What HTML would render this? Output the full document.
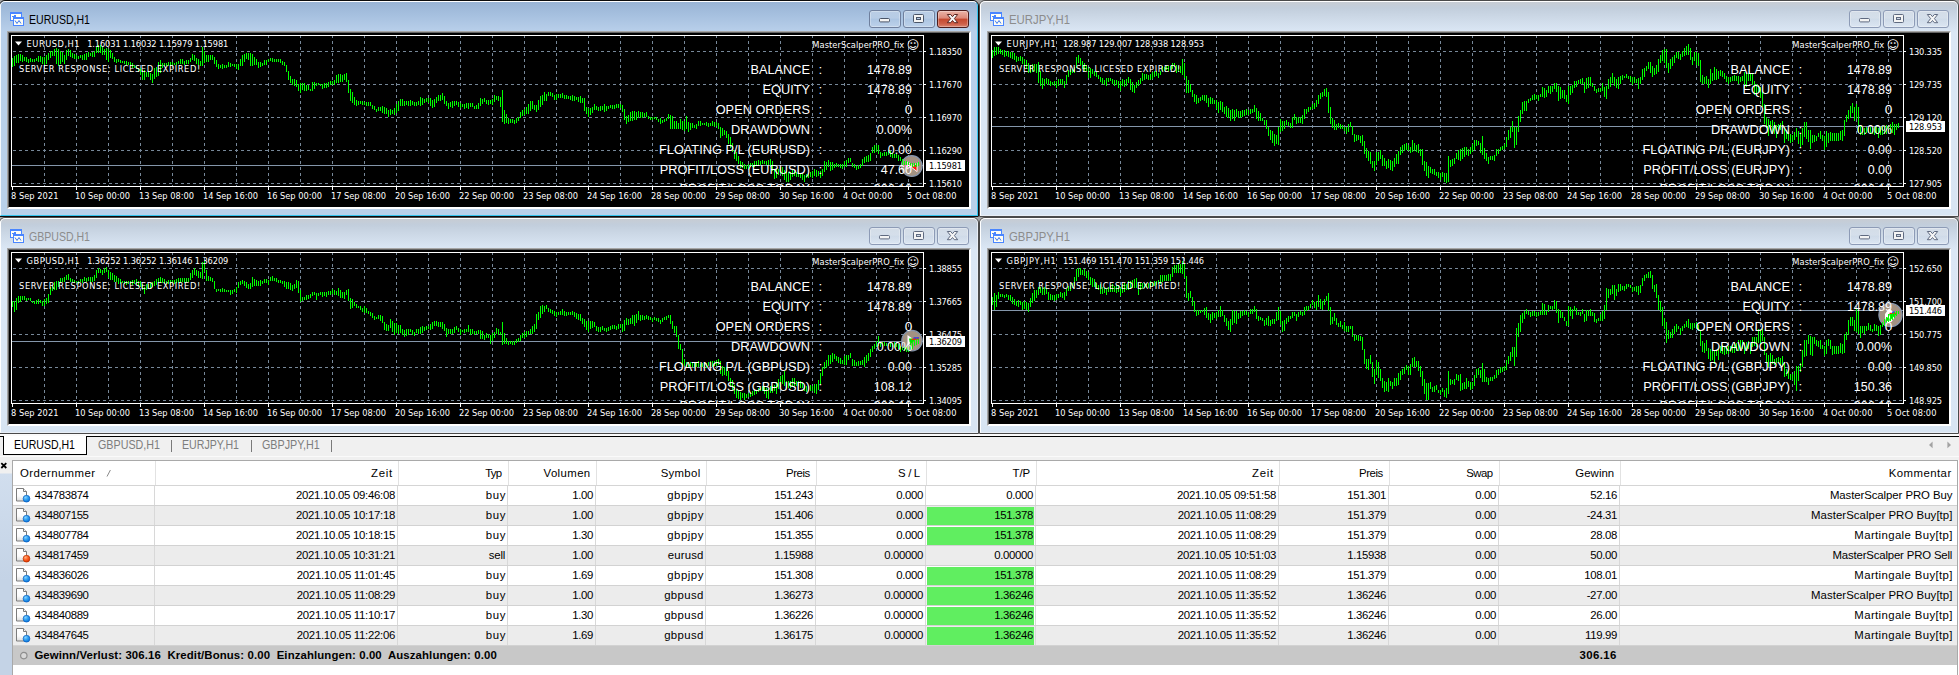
<!DOCTYPE html><html><head><meta charset="utf-8"><title>MetaTrader</title><style>

html,body{margin:0;padding:0}
body{width:1959px;height:675px;overflow:hidden;background:#fff;position:relative}
.a,.t{position:absolute}
.t{white-space:pre;display:block}
.top{position:absolute;left:0;top:0;width:1959px;height:434px;background:#a4a4a4}
.win{position:absolute;width:978px;height:215px;border:1px solid #4a4a4a;border-radius:6px 6px 1px 1px;
 background:linear-gradient(#c8ccd2 0,#c2cedc 7px,#cdd9e7 17px,#dbe7f5 31px,#d8e5f3 100%);overflow:hidden}
.win.act{background:linear-gradient(#98b3d4 0,#a6c0df 14px,#b8cfea 30px,#b9d1ea 100%);border-color:#0c0c0c}
.wi{position:absolute;left:0;top:-1px;width:978px;height:217px;
 box-shadow:inset 1px 0 0 #fbfdff, inset 0 0 0 #fff}
.win .wi::before{content:"";position:absolute;left:0;top:1px;width:978px;height:215px;box-sizing:border-box;
 border:1px solid #e8eef6;border-top-color:#fff;border-left-color:#fff;border-radius:5px 5px 0 0;pointer-events:none}
.win.act .wi::before{border-right-color:#35c4ee;border-bottom-color:#35c4ee;border-top-color:#fff;border-left-color:#f4f8fc}
.client{position:absolute;left:7px;top:31px;width:960px;height:174px;background:#000;
 border-style:solid;border-width:2px;border-color:#a6a6a6 #fff #fff #a6a6a6;
 box-shadow:none}
.client::before{content:"";position:absolute;left:-1px;top:-1px;right:-1px;bottom:-1px;border:1px solid;border-color:#646464 #fff #fff #646464}
.clip{position:absolute;left:12px;top:36px;width:911px;height:150px;overflow:hidden}
.clip .t{margin-left:-12px;margin-top:-36px}
.btn{position:absolute;width:30px;height:16px;border:1px solid #8d9bb6;border-radius:3px;
 background:linear-gradient(rgba(255,255,255,.26) 0,rgba(255,255,255,.16) 45%,rgba(255,255,255,.02) 50%,rgba(255,255,255,.12) 100%);
 box-shadow:inset 0 0 0 1px rgba(255,255,255,.3)}
.win.act .btn{border-color:#6f7f9d}
.win.act .btn.cls{border-color:#4c1d1d;background:linear-gradient(#eab4a8 0,#dc8878 45%,#c4482f 50%,#cd5f48 80%,#d88472 100%);box-shadow:inset 0 0 0 1px rgba(255,255,255,.3)}
.tabbar{position:absolute;left:0;top:434px;width:1959px;height:26px;background:#f0f0f0}
.tabbar::before{content:"";position:absolute;left:0;top:0;width:1959px;height:2px;background:#fbfbfb;border-bottom:1px solid #000}
.tabbar::after{content:"";position:absolute;left:0;top:22px;width:1959px;height:1px;background:#fafafa}
.tab1{position:absolute;left:3px;top:436px;width:84px;height:19px;box-sizing:border-box;background:#fff;border:1px solid #000;border-top:none}
.gutter{position:absolute;left:0;top:460px;width:12px;height:215px;background:linear-gradient(#f0f0f0 0,#f0f0f0 13px,#d1deee 14px,#c4d3e6 120px,#c4d3e6 100%)}
.table{position:absolute;left:0;top:0;width:1959px;height:675px}
.table::before{content:"";position:absolute;left:12px;top:460px;width:1946px;height:215px;box-sizing:border-box;border:1px solid #a9a9a9;border-bottom:none;background:#fff}

</style></head><body>
<div class="top"></div>
<div class="win act" style="left:-1px;top:0px">
<div class="wi">
<svg class="a" style="left:9px;top:11px" width="17" height="16" viewBox="9 11 17 16" shape-rendering="crispEdges"><rect x="10.5" y="13" width="11" height="7.5" fill="#fffef4" stroke="#4a86ff"/><rect x="10" y="12" width="12" height="2" fill="#4a86ff"/><path d="M12 16.5h2l1-1 1 2h3" fill="none" stroke="#4a86ff"/><rect x="13.5" y="18" width="10" height="7.5" fill="#fffef4" stroke="#4a86ff"/><rect x="13" y="17" width="11" height="2" fill="#4a86ff"/><path d="M15 20.5l2 3 2-3 2 3" fill="none" stroke="#3a76f0" shape-rendering="auto"/></svg>
<span class="t" style="top:12.10px;line-height:16px;font-family:'Liberation Sans',sans-serif;font-size:12.4px;color:#000;left:29.00px;transform:scaleX(0.8513);transform-origin:left center;">EURUSD,H1</span>
<div class="btn min" style="left:869px;top:10px"></div>
<div class="btn max" style="left:903px;top:10px"></div>
<div class="btn cls" style="left:937px;top:10px"></div>
<svg class="a" style="left:869px;top:10px" width="100" height="18" viewBox="869 10 100 18"><rect x="879.5" y="18.5" width="10" height="3.4" rx="1" fill="#f4f4f4" stroke="#4a5568" stroke-width="1"/><rect x="913.5" y="14.5" width="10" height="8" rx="1" fill="#f4f4f4" stroke="#4a5568" stroke-width="1"/><rect x="916.5" y="17.5" width="4" height="2" fill="#b6cbe6" stroke="#4a5568" stroke-width="1"/><path d="M947.3 14.5l3.4 0 1.8 2.2 1.8-2.2 3.4 0-3.3 4.1 3.3 4.1-3.4 0-1.8-2.2-1.8 2.2-3.4 0 3.3-4.1z" fill="#f6f6f6" stroke="#5a2420" stroke-width="1" stroke-linejoin="round"/></svg>
<div class="client">
</div>
<svg class="a" style="left:9px;top:33px" width="961" height="174" viewBox="9 33 961 174" shape-rendering="crispEdges"><path d="M44.5 35V186M76.5 35V186M108.5 35V186M140.5 35V186M172.5 35V186M204.5 35V186M236.5 35V186M268.5 35V186M300.5 35V186M332.5 35V186M364.5 35V186M396.5 35V186M428.5 35V186M460.5 35V186M492.5 35V186M524.5 35V186M556.5 35V186M588.5 35V186M620.5 35V186M652.5 35V186M684.5 35V186M716.5 35V186M748.5 35V186M780.5 35V186M812.5 35V186M844.5 35V186M876.5 35V186M908.5 35V186" stroke="#778899" stroke-dasharray="3 3" fill="none"/><path d="M13 51.5H923M13 84.5H923M13 117.5H923M13 150.5H923M13 183.5H923" stroke="#778899" stroke-dasharray="3 3" fill="none"/><path d="M12 165.5H923" stroke="#8496aa" fill="none"/><path d="M11.5 35V187M11 35.5H924M923.5 35V187M11 186.5H924" stroke="#fff" fill="none"/><path d="M12.5 187V190M76.5 187V190M140.5 187V190M204.5 187V190M268.5 187V190M332.5 187V190M396.5 187V190M460.5 187V190M524.5 187V190M588.5 187V190M652.5 187V190M716.5 187V190M780.5 187V190M844.5 187V190M908.5 187V190M924 51.5H926M924 84.5H926M924 117.5H926M924 150.5H926M924 183.5H926" stroke="#fff" fill="none"/><g shape-rendering="auto"><circle cx="911.7" cy="166" r="10.4" fill="#a39282" stroke="#8797ae" stroke-width="1.2"/><path d="M907.1 162l5.6 3.6-5.6 3.4z" fill="#ff6ec7" stroke="#fff" stroke-width=".9"/><path d="M904.7 165.6h3" stroke="#ff6ec7" stroke-width="1.4"/><path d="M917.1 163v8.6l-5.6-4.3z" fill="#ff1414" stroke="#fff" stroke-width=".9"/></g><path d="M12.5 58V67M14.5 56V66M16.5 55V63M18.5 54V63M20.5 54V61M22.5 55V62M24.5 57V61M26.5 57V62M28.5 59V63M30.5 58V62M32.5 59V62M34.5 59V62M36.5 58V61M38.5 56V62M40.5 56V62M42.5 57V64M44.5 57V65M46.5 55V64M48.5 53V60M50.5 51V58M52.5 51V56M54.5 49V56M56.5 48V64M58.5 49V66M60.5 51V64M62.5 52V62M64.5 55V64M66.5 50V60M68.5 49V56M70.5 50V57M72.5 53V58M74.5 54V59M76.5 55V59M78.5 56V59M80.5 55V58M82.5 55V60M84.5 54V60M86.5 53V60M88.5 52V57M90.5 53V56M92.5 52V57M94.5 51V57M96.5 47V53M98.5 45V53M100.5 45V53M102.5 47V55M104.5 49V55M106.5 48V60M108.5 49V62M110.5 50V58M112.5 53V59M114.5 57V62M116.5 59V63M118.5 59V62M120.5 60V63M122.5 61V63M124.5 61V64M126.5 61V65M128.5 62V65M130.5 62V66M132.5 63V68M134.5 65V68M136.5 66V69M138.5 68V72M140.5 68V75M142.5 70V80M144.5 70V80M146.5 72V77M148.5 71V77M150.5 73V80M152.5 74V83M154.5 68V79M156.5 67V77M158.5 62V76M160.5 60V73M162.5 63V68M164.5 63V66M166.5 63V66M168.5 62V66M170.5 62V66M172.5 62V65M174.5 63V65M176.5 62V65M178.5 61V64M180.5 59V64M182.5 59V64M184.5 61V65M186.5 60V64M188.5 60V64M190.5 58V62M192.5 54V60M194.5 55V61M196.5 58V64M198.5 59V65M200.5 61V66M202.5 47V66M204.5 51V63M206.5 55V62M208.5 55V62M210.5 55V60M212.5 55V60M214.5 57V64M216.5 60V67M218.5 64V69M220.5 65V68M222.5 64V69M224.5 65V68M226.5 65V68M228.5 62V67M230.5 63V67M232.5 64V66M234.5 64V67M236.5 64V69M238.5 64V70M240.5 59V66M242.5 55V66M244.5 54V62M246.5 53V59M248.5 53V60M250.5 53V66M252.5 54V66M254.5 57V65M256.5 59V65M258.5 62V68M260.5 62V67M262.5 63V66M264.5 60V65M266.5 60V65M268.5 59V62M270.5 58V61M272.5 58V62M274.5 59V62M276.5 59V62M278.5 59V62M280.5 59V63M282.5 61V65M284.5 62V66M286.5 65V72M288.5 71V80M290.5 76V83M292.5 79V85M294.5 79V86M296.5 80V87M298.5 84V91M300.5 83V93M302.5 83V90M304.5 83V91M306.5 85V91M308.5 85V90M310.5 89V91M312.5 82V91M314.5 82V89M316.5 83V86M318.5 83V85M320.5 84V86M322.5 84V89M324.5 83V88M326.5 83V88M328.5 82V87M330.5 81V85M332.5 81V85M334.5 80V85M336.5 75V83M338.5 74V83M340.5 74V82M342.5 75V82M344.5 74V80M346.5 73V82M348.5 80V93M350.5 89V101M352.5 92V103M354.5 97V105M356.5 100V106M358.5 101V105M360.5 101V104M362.5 101V105M364.5 102V105M366.5 102V106M368.5 102V106M370.5 102V106M372.5 105V109M374.5 106V110M376.5 109V112M378.5 107V111M380.5 107V111M382.5 106V113M384.5 107V114M386.5 108V114M388.5 110V117M390.5 109V115M392.5 110V114M394.5 108V115M396.5 104V113M398.5 101V111M400.5 99V106M402.5 99V106M404.5 101V106M406.5 101V105M408.5 101V106M410.5 100V106M412.5 101V105M414.5 102V106M416.5 102V106M418.5 101V105M420.5 97V106M422.5 98V105M424.5 99V103M426.5 98V102M428.5 98V103M430.5 98V106M432.5 100V108M434.5 99V107M436.5 97V103M438.5 95V101M440.5 95V101M442.5 93V100M444.5 96V104M446.5 101V106M448.5 103V109M450.5 102V107M452.5 101V108M454.5 101V106M456.5 101V105M458.5 102V107M460.5 103V108M462.5 104V107M464.5 104V109M466.5 103V108M468.5 103V109M470.5 103V107M472.5 103V107M474.5 106V109M476.5 105V109M478.5 103V109M480.5 98V106M482.5 99V104M484.5 98V102M486.5 100V104M488.5 100V105M490.5 100V104M492.5 99V105M494.5 95V102M496.5 96V100M498.5 96V101M500.5 97V107M502.5 90V122M504.5 110V124M506.5 114V123M508.5 118V124M510.5 119V123M512.5 119V123M514.5 120V124M516.5 118V123M518.5 117V121M520.5 112V118M522.5 110V116M524.5 109V115M526.5 107V114M528.5 104V114M530.5 101V111M532.5 101V109M534.5 105V110M536.5 105V112M538.5 100V110M540.5 96V107M542.5 95V105M544.5 92V101M546.5 94V101M548.5 92V96M550.5 92V96M552.5 93V97M554.5 95V100M556.5 94V100M558.5 94V98M560.5 94V98M562.5 93V98M564.5 95V99M566.5 95V99M568.5 96V99M570.5 96V100M572.5 95V101M574.5 96V101M576.5 97V100M578.5 97V102M580.5 96V103M582.5 98V103M584.5 98V111M586.5 107V114M588.5 108V117M590.5 108V115M592.5 107V113M594.5 104V110M596.5 106V110M598.5 107V111M600.5 106V111M602.5 106V110M604.5 104V112M606.5 106V111M608.5 106V109M610.5 105V108M612.5 105V109M614.5 105V109M616.5 104V108M618.5 104V108M620.5 104V108M622.5 105V112M624.5 109V120M626.5 116V124M628.5 115V122M630.5 112V121M632.5 111V121M634.5 111V120M636.5 112V120M638.5 111V118M640.5 112V118M642.5 112V118M644.5 113V117M646.5 112V117M648.5 116V119M650.5 117V120M652.5 117V120M654.5 117V119M656.5 117V120M658.5 119V122M660.5 118V124M662.5 120V123M664.5 119V122M666.5 118V121M668.5 114V119M670.5 115V129M672.5 116V129M674.5 121V129M676.5 121V129M678.5 123V129M680.5 119V129M682.5 121V130M684.5 121V131M686.5 116V129M688.5 122V132M690.5 123V130M692.5 123V128M694.5 125V128M696.5 124V129M698.5 121V126M700.5 121V126M702.5 123V125M704.5 123V125M706.5 122V126M708.5 123V127M710.5 123V126M712.5 121V126M714.5 122V127M716.5 122V126M718.5 123V129M720.5 127V138M722.5 128V136M724.5 130V135M726.5 131V138M728.5 134V144M730.5 137V148M732.5 143V152M734.5 150V159M736.5 152V161M738.5 156V164M740.5 161V168M742.5 162V168M744.5 164V169M746.5 165V169M748.5 164V169M750.5 163V167M752.5 163V167M754.5 161V167M756.5 161V166M758.5 160V165M760.5 161V165M762.5 160V164M764.5 161V164M766.5 161V165M768.5 160V165M770.5 159V167M772.5 161V171M774.5 169V179M776.5 168V178M778.5 169V175M780.5 167V174M782.5 167V176M784.5 170V180M786.5 171V182M788.5 172V182M790.5 172V180M792.5 169V177M794.5 171V176M796.5 172V177M798.5 172V177M800.5 173V178M802.5 174V180M804.5 175V182M806.5 174V178M808.5 173V178M810.5 172V177M812.5 171V178M814.5 169V176M816.5 170V177M818.5 171V176M820.5 171V178M822.5 169V176M824.5 161V172M826.5 162V170M828.5 160V167M830.5 162V171M832.5 162V170M834.5 164V168M836.5 163V167M838.5 164V167M840.5 164V168M842.5 164V169M844.5 161V167M846.5 160V167M848.5 158V163M850.5 158V162M852.5 163V167M854.5 164V168M856.5 166V170M858.5 165V169M860.5 164V168M862.5 159V166M864.5 157V163M866.5 156V162M868.5 155V162M870.5 153V161M872.5 147V153M874.5 145V153M876.5 145V152M878.5 145V154M880.5 152V158M882.5 153V156M884.5 152V156M886.5 152V156M888.5 150V155M890.5 151V157M892.5 153V158M894.5 154V158M896.5 154V158M898.5 155V161M900.5 157V161M902.5 159V165M904.5 161V165M906.5 161V165M908.5 162V167M910.5 163V166M912.5 163V167M914.5 163V167M916.5 163V167M918.5 162V166" stroke="#00ff00" fill="none"/><path d="M15 41.5h7l-3.5 4z" fill="#fff" shape-rendering="auto"/><rect x="926" y="160" width="39" height="11" fill="#fff"/></svg>
<span class="t" style="top:38.20px;line-height:12px;font-family:'DejaVu Sans Condensed','DejaVu Sans',sans-serif;font-size:9.2px;color:#fff;letter-spacing:0.519px;left:26.60px;">EURUSD,H1</span>
<span class="t" style="top:38.20px;line-height:12px;font-family:'DejaVu Sans Condensed','DejaVu Sans',sans-serif;font-size:9.2px;color:#fff;letter-spacing:-0.115px;left:87.20px;">1.16031 1.16032 1.15979 1.15981</span>
<span class="t" style="top:62.80px;line-height:12px;font-family:'DejaVu Sans Condensed','DejaVu Sans',sans-serif;font-size:9.2px;color:#fff;letter-spacing:0.629px;left:19.00px;">SERVER RESPONSE: LICESED EXPIRED!</span>
<span class="t" style="top:38.60px;line-height:12px;font-family:'DejaVu Sans Condensed','DejaVu Sans',sans-serif;font-size:9.2px;color:#fff;letter-spacing:0.069px;left:812.30px;">MasterScalperPRO_fix</span>
<span class="t" style="left:906.8px;top:38.2px;line-height:14px;font-family:'DejaVu Sans',sans-serif;font-size:12px;color:#fff">☺</span>
<div class="clip">
<span class="t" style="top:62.00px;line-height:16px;font-family:'Liberation Sans',sans-serif;font-size:13.6px;color:#fff;left:-189.70px;width:1000px;text-align:right;transform:scaleX(0.9387);transform-origin:right center;">BALANCE</span>
<span class="t" style="top:62.00px;line-height:16px;font-family:'Liberation Sans',sans-serif;font-size:13.6px;color:#fff;left:818.50px;">:</span>
<span class="t" style="top:62.00px;line-height:16px;font-family:'Liberation Sans',sans-serif;font-size:13.6px;color:#fff;left:-87.70px;width:1000px;text-align:right;transform:scaleX(0.9176);transform-origin:right center;">1478.89</span>
<span class="t" style="top:82.00px;line-height:16px;font-family:'Liberation Sans',sans-serif;font-size:13.6px;color:#fff;left:-189.70px;width:1000px;text-align:right;transform:scaleX(0.9387);transform-origin:right center;">EQUITY</span>
<span class="t" style="top:82.00px;line-height:16px;font-family:'Liberation Sans',sans-serif;font-size:13.6px;color:#fff;left:818.50px;">:</span>
<span class="t" style="top:82.00px;line-height:16px;font-family:'Liberation Sans',sans-serif;font-size:13.6px;color:#fff;left:-87.70px;width:1000px;text-align:right;transform:scaleX(0.9176);transform-origin:right center;">1478.89</span>
<span class="t" style="top:102.00px;line-height:16px;font-family:'Liberation Sans',sans-serif;font-size:13.6px;color:#fff;left:-189.70px;width:1000px;text-align:right;transform:scaleX(0.9387);transform-origin:right center;">OPEN ORDERS</span>
<span class="t" style="top:102.00px;line-height:16px;font-family:'Liberation Sans',sans-serif;font-size:13.6px;color:#fff;left:818.50px;">:</span>
<span class="t" style="top:102.00px;line-height:16px;font-family:'Liberation Sans',sans-serif;font-size:13.6px;color:#fff;left:-87.70px;width:1000px;text-align:right;">0</span>
<span class="t" style="top:122.00px;line-height:16px;font-family:'Liberation Sans',sans-serif;font-size:13.6px;color:#fff;left:-189.70px;width:1000px;text-align:right;transform:scaleX(0.9387);transform-origin:right center;">DRAWDOWN</span>
<span class="t" style="top:122.00px;line-height:16px;font-family:'Liberation Sans',sans-serif;font-size:13.6px;color:#fff;left:818.50px;">:</span>
<span class="t" style="top:122.00px;line-height:16px;font-family:'Liberation Sans',sans-serif;font-size:13.6px;color:#fff;left:-87.70px;width:1000px;text-align:right;transform:scaleX(0.9176);transform-origin:right center;">0.00%</span>
<span class="t" style="top:142.00px;line-height:16px;font-family:'Liberation Sans',sans-serif;font-size:13.6px;color:#fff;left:-189.70px;width:1000px;text-align:right;transform:scaleX(0.9387);transform-origin:right center;">FLOATING P/L (EURUSD)</span>
<span class="t" style="top:142.00px;line-height:16px;font-family:'Liberation Sans',sans-serif;font-size:13.6px;color:#fff;left:818.50px;">:</span>
<span class="t" style="top:142.00px;line-height:16px;font-family:'Liberation Sans',sans-serif;font-size:13.6px;color:#fff;left:-87.70px;width:1000px;text-align:right;transform:scaleX(0.9176);transform-origin:right center;">0.00</span>
<span class="t" style="top:162.00px;line-height:16px;font-family:'Liberation Sans',sans-serif;font-size:13.6px;color:#fff;left:-189.70px;width:1000px;text-align:right;transform:scaleX(0.9387);transform-origin:right center;">PROFIT/LOSS (EURUSD)</span>
<span class="t" style="top:162.00px;line-height:16px;font-family:'Liberation Sans',sans-serif;font-size:13.6px;color:#fff;left:818.50px;">:</span>
<span class="t" style="top:162.00px;line-height:16px;font-family:'Liberation Sans',sans-serif;font-size:13.6px;color:#fff;left:-87.70px;width:1000px;text-align:right;transform:scaleX(0.9176);transform-origin:right center;">47.60</span>
<span class="t" style="top:181.00px;line-height:16px;font-family:'Liberation Sans',sans-serif;font-size:13.6px;color:#fff;left:-189.70px;width:1000px;text-align:right;transform:scaleX(0.9387);transform-origin:right center;">PROFIT/LOSS TODAY</span>
<span class="t" style="top:181.00px;line-height:16px;font-family:'Liberation Sans',sans-serif;font-size:13.6px;color:#fff;left:818.50px;">:</span>
<span class="t" style="top:181.00px;line-height:16px;font-family:'Liberation Sans',sans-serif;font-size:13.6px;color:#fff;left:-87.70px;width:1000px;text-align:right;transform:scaleX(0.9176);transform-origin:right center;">306.16</span>
</div>
<span class="t" style="top:189.80px;line-height:12px;font-family:'DejaVu Sans Condensed','DejaVu Sans',sans-serif;font-size:9.2px;color:#fff;letter-spacing:0.035px;left:11.00px;">8 Sep 2021</span>
<span class="t" style="top:189.80px;line-height:12px;font-family:'DejaVu Sans Condensed','DejaVu Sans',sans-serif;font-size:9.2px;color:#fff;letter-spacing:-0.022px;left:75.00px;">10 Sep 00:00</span>
<span class="t" style="top:189.80px;line-height:12px;font-family:'DejaVu Sans Condensed','DejaVu Sans',sans-serif;font-size:9.2px;color:#fff;letter-spacing:-0.022px;left:139.00px;">13 Sep 08:00</span>
<span class="t" style="top:189.80px;line-height:12px;font-family:'DejaVu Sans Condensed','DejaVu Sans',sans-serif;font-size:9.2px;color:#fff;letter-spacing:-0.022px;left:203.00px;">14 Sep 16:00</span>
<span class="t" style="top:189.80px;line-height:12px;font-family:'DejaVu Sans Condensed','DejaVu Sans',sans-serif;font-size:9.2px;color:#fff;letter-spacing:-0.022px;left:267.00px;">16 Sep 00:00</span>
<span class="t" style="top:189.80px;line-height:12px;font-family:'DejaVu Sans Condensed','DejaVu Sans',sans-serif;font-size:9.2px;color:#fff;letter-spacing:-0.022px;left:331.00px;">17 Sep 08:00</span>
<span class="t" style="top:189.80px;line-height:12px;font-family:'DejaVu Sans Condensed','DejaVu Sans',sans-serif;font-size:9.2px;color:#fff;letter-spacing:-0.022px;left:395.00px;">20 Sep 16:00</span>
<span class="t" style="top:189.80px;line-height:12px;font-family:'DejaVu Sans Condensed','DejaVu Sans',sans-serif;font-size:9.2px;color:#fff;letter-spacing:-0.022px;left:459.00px;">22 Sep 00:00</span>
<span class="t" style="top:189.80px;line-height:12px;font-family:'DejaVu Sans Condensed','DejaVu Sans',sans-serif;font-size:9.2px;color:#fff;letter-spacing:-0.022px;left:523.00px;">23 Sep 08:00</span>
<span class="t" style="top:189.80px;line-height:12px;font-family:'DejaVu Sans Condensed','DejaVu Sans',sans-serif;font-size:9.2px;color:#fff;letter-spacing:-0.022px;left:587.00px;">24 Sep 16:00</span>
<span class="t" style="top:189.80px;line-height:12px;font-family:'DejaVu Sans Condensed','DejaVu Sans',sans-serif;font-size:9.2px;color:#fff;letter-spacing:-0.022px;left:651.00px;">28 Sep 00:00</span>
<span class="t" style="top:189.80px;line-height:12px;font-family:'DejaVu Sans Condensed','DejaVu Sans',sans-serif;font-size:9.2px;color:#fff;letter-spacing:-0.022px;left:715.00px;">29 Sep 08:00</span>
<span class="t" style="top:189.80px;line-height:12px;font-family:'DejaVu Sans Condensed','DejaVu Sans',sans-serif;font-size:9.2px;color:#fff;letter-spacing:-0.022px;left:779.00px;">30 Sep 16:00</span>
<span class="t" style="top:189.80px;line-height:12px;font-family:'DejaVu Sans Condensed','DejaVu Sans',sans-serif;font-size:9.2px;color:#fff;letter-spacing:0.082px;left:843.00px;">4 Oct 00:00</span>
<span class="t" style="top:189.80px;line-height:12px;font-family:'DejaVu Sans Condensed','DejaVu Sans',sans-serif;font-size:9.2px;color:#fff;letter-spacing:0.082px;left:907.00px;">5 Oct 08:00</span>
<span class="t" style="top:45.60px;line-height:12px;font-family:'DejaVu Sans Condensed','DejaVu Sans',sans-serif;font-size:9.2px;color:#fff;letter-spacing:-0.203px;left:929.00px;">1.18350</span>
<span class="t" style="top:78.60px;line-height:12px;font-family:'DejaVu Sans Condensed','DejaVu Sans',sans-serif;font-size:9.2px;color:#fff;letter-spacing:-0.203px;left:929.00px;">1.17670</span>
<span class="t" style="top:111.60px;line-height:12px;font-family:'DejaVu Sans Condensed','DejaVu Sans',sans-serif;font-size:9.2px;color:#fff;letter-spacing:-0.203px;left:929.00px;">1.16970</span>
<span class="t" style="top:144.60px;line-height:12px;font-family:'DejaVu Sans Condensed','DejaVu Sans',sans-serif;font-size:9.2px;color:#fff;letter-spacing:-0.203px;left:929.00px;">1.16290</span>
<span class="t" style="top:177.60px;line-height:12px;font-family:'DejaVu Sans Condensed','DejaVu Sans',sans-serif;font-size:9.2px;color:#fff;letter-spacing:-0.203px;left:929.00px;">1.15610</span>
<span class="t" style="top:159.60px;line-height:12px;font-family:'DejaVu Sans Condensed','DejaVu Sans',sans-serif;font-size:9.2px;color:#000;letter-spacing:-0.203px;left:929.00px;">1.15981</span>
</div></div>
<div class="win" style="left:979px;top:0px">
<div class="wi">
<svg class="a" style="left:9px;top:11px" width="17" height="16" viewBox="9 11 17 16" shape-rendering="crispEdges"><rect x="10.5" y="13" width="11" height="7.5" fill="#fffef4" stroke="#4a86ff"/><rect x="10" y="12" width="12" height="2" fill="#4a86ff"/><path d="M12 16.5h2l1-1 1 2h3" fill="none" stroke="#4a86ff"/><rect x="13.5" y="18" width="10" height="7.5" fill="#fffef4" stroke="#4a86ff"/><rect x="13" y="17" width="11" height="2" fill="#4a86ff"/><path d="M15 20.5l2 3 2-3 2 3" fill="none" stroke="#3a76f0" shape-rendering="auto"/></svg>
<span class="t" style="top:12.10px;line-height:16px;font-family:'Liberation Sans',sans-serif;font-size:12.4px;color:#8c8c8c;left:29.00px;transform:scaleX(0.9156);transform-origin:left center;">EURJPY,H1</span>
<div class="btn min" style="left:869px;top:10px"></div>
<div class="btn max" style="left:903px;top:10px"></div>
<div class="btn cls" style="left:937px;top:10px"></div>
<svg class="a" style="left:869px;top:10px" width="100" height="18" viewBox="869 10 100 18"><rect x="879.5" y="18.5" width="10" height="3.4" rx="1" fill="#f4f4f4" stroke="#5f6a80" stroke-width="1"/><rect x="913.5" y="14.5" width="10" height="8" rx="1" fill="#f4f4f4" stroke="#5f6a80" stroke-width="1"/><rect x="916.5" y="17.5" width="4" height="2" fill="#cfd9e8" stroke="#5f6a80" stroke-width="1"/><path d="M947.3 14.5l3.4 0 1.8 2.2 1.8-2.2 3.4 0-3.3 4.1 3.3 4.1-3.4 0-1.8-2.2-1.8 2.2-3.4 0 3.3-4.1z" fill="#f6f6f6" stroke="#5f6a80" stroke-width="1" stroke-linejoin="round"/></svg>
<div class="client">
</div>
<svg class="a" style="left:9px;top:33px" width="961" height="174" viewBox="9 33 961 174" shape-rendering="crispEdges"><path d="M44.5 35V186M76.5 35V186M108.5 35V186M140.5 35V186M172.5 35V186M204.5 35V186M236.5 35V186M268.5 35V186M300.5 35V186M332.5 35V186M364.5 35V186M396.5 35V186M428.5 35V186M460.5 35V186M492.5 35V186M524.5 35V186M556.5 35V186M588.5 35V186M620.5 35V186M652.5 35V186M684.5 35V186M716.5 35V186M748.5 35V186M780.5 35V186M812.5 35V186M844.5 35V186M876.5 35V186M908.5 35V186" stroke="#778899" stroke-dasharray="3 3" fill="none"/><path d="M13 51.5H923M13 84.5H923M13 117.5H923M13 150.5H923M13 183.5H923" stroke="#778899" stroke-dasharray="3 3" fill="none"/><path d="M12 126.5H923" stroke="#8496aa" fill="none"/><path d="M11.5 35V187M11 35.5H924M923.5 35V187M11 186.5H924" stroke="#fff" fill="none"/><path d="M12.5 187V190M76.5 187V190M140.5 187V190M204.5 187V190M268.5 187V190M332.5 187V190M396.5 187V190M460.5 187V190M524.5 187V190M588.5 187V190M652.5 187V190M716.5 187V190M780.5 187V190M844.5 187V190M908.5 187V190M924 51.5H926M924 84.5H926M924 117.5H926M924 150.5H926M924 183.5H926" stroke="#fff" fill="none"/><path d="M12.5 50V58M14.5 47V56M16.5 47V55M18.5 47V54M20.5 49V54M22.5 50V55M24.5 50V57M26.5 51V56M28.5 51V57M30.5 52V58M32.5 52V59M34.5 53V60M36.5 56V62M38.5 57V61M40.5 56V61M42.5 57V64M44.5 59V67M46.5 60V69M48.5 63V73M50.5 65V73M52.5 64V72M54.5 64V71M56.5 64V73M58.5 62V83M60.5 71V86M62.5 78V89M64.5 79V86M66.5 78V84M68.5 79V85M70.5 81V86M72.5 82V85M74.5 81V86M76.5 81V88M78.5 79V86M80.5 79V84M82.5 79V85M84.5 81V88M86.5 75V84M88.5 70V77M90.5 69V75M92.5 69V73M94.5 67V73M96.5 57V68M98.5 55V63M100.5 58V65M102.5 61V69M104.5 63V71M106.5 65V71M108.5 67V78M110.5 68V78M112.5 69V74M114.5 71V76M116.5 72V77M118.5 75V79M120.5 77V82M122.5 78V84M124.5 80V85M126.5 78V86M128.5 78V82M130.5 78V81M132.5 79V84M134.5 80V86M136.5 80V85M138.5 81V88M140.5 81V91M142.5 79V86M144.5 80V87M146.5 79V86M148.5 77V83M150.5 79V90M152.5 82V92M154.5 85V93M156.5 82V88M158.5 80V86M160.5 78V84M162.5 73V81M164.5 74V80M166.5 74V79M168.5 75V80M170.5 74V80M172.5 72V79M174.5 71V77M176.5 71V76M178.5 73V78M180.5 71V75M182.5 66V71M184.5 67V71M186.5 66V70M188.5 66V71M190.5 66V70M192.5 63V69M194.5 63V67M196.5 65V73M198.5 66V72M200.5 66V73M202.5 59V75M204.5 63V78M206.5 76V93M208.5 80V93M210.5 84V92M212.5 90V97M214.5 94V102M216.5 95V104M218.5 98V103M220.5 97V101M222.5 95V100M224.5 95V101M226.5 95V103M228.5 98V107M230.5 97V104M232.5 98V104M234.5 100V104M236.5 100V109M238.5 102V113M240.5 101V110M242.5 102V112M244.5 107V114M246.5 106V117M248.5 108V118M250.5 110V121M252.5 109V119M254.5 110V121M256.5 109V117M258.5 111V118M260.5 111V118M262.5 110V117M264.5 110V116M266.5 109V115M268.5 110V115M270.5 109V114M272.5 109V113M274.5 105V112M276.5 108V119M278.5 111V121M280.5 113V121M282.5 118V121M284.5 120V125M286.5 120V129M288.5 127V136M290.5 130V140M292.5 131V143M294.5 134V146M296.5 135V144M298.5 127V145M300.5 119V132M302.5 121V131M304.5 121V129M306.5 120V125M308.5 122V126M310.5 123V128M312.5 117V128M314.5 114V120M316.5 117V124M318.5 117V123M320.5 117V123M322.5 115V124M324.5 109V119M326.5 109V114M328.5 107V112M330.5 107V110M332.5 104V109M334.5 103V109M336.5 100V107M338.5 95V104M340.5 93V99M342.5 92V97M344.5 89V96M346.5 88V97M348.5 92V113M350.5 107V124M352.5 118V128M354.5 120V130M356.5 124V130M358.5 123V128M360.5 124V129M362.5 125V129M364.5 127V131M366.5 127V134M368.5 124V132M370.5 122V127M372.5 126V135M374.5 134V142M376.5 135V141M378.5 135V140M380.5 136V143M382.5 135V146M384.5 141V154M386.5 148V158M388.5 151V161M390.5 152V164M392.5 161V168M394.5 161V171M396.5 152V165M398.5 152V161M400.5 150V159M402.5 155V166M404.5 158V166M406.5 161V169M408.5 159V168M410.5 160V170M412.5 161V171M414.5 158V167M416.5 154V164M418.5 151V164M420.5 147V155M422.5 145V153M424.5 144V151M426.5 143V150M428.5 145V151M430.5 147V153M432.5 140V152M434.5 143V151M436.5 145V152M438.5 144V153M440.5 149V156M442.5 149V165M444.5 161V171M446.5 162V176M448.5 166V178M450.5 167V173M452.5 169V174M454.5 169V175M456.5 172V176M458.5 172V178M460.5 173V180M462.5 172V177M464.5 173V182M466.5 173V183M468.5 156V182M470.5 160V167M472.5 159V166M474.5 158V164M476.5 153V159M478.5 150V160M480.5 149V161M482.5 148V159M484.5 147V157M486.5 147V155M488.5 149V156M490.5 147V154M492.5 144V152M494.5 140V150M496.5 140V146M498.5 141V145M500.5 143V153M502.5 136V155M504.5 148V159M506.5 153V161M508.5 157V164M510.5 156V160M512.5 156V160M514.5 155V161M516.5 149V156M518.5 149V154M520.5 147V151M522.5 146V150M524.5 144V149M526.5 137V147M528.5 130V140M530.5 127V138M532.5 121V132M534.5 127V148M536.5 127V145M538.5 116V132M540.5 110V122M542.5 102V114M544.5 101V111M546.5 101V111M548.5 99V103M550.5 98V101M552.5 95V100M554.5 94V100M556.5 95V99M558.5 95V101M560.5 94V97M562.5 87V97M564.5 88V98M566.5 90V97M568.5 86V93M570.5 86V94M572.5 86V92M574.5 83V89M576.5 83V92M578.5 86V101M580.5 87V99M582.5 90V98M584.5 90V99M586.5 95V102M588.5 86V104M590.5 86V95M592.5 85V93M594.5 81V88M596.5 81V87M598.5 80V84M600.5 79V84M602.5 78V84M604.5 82V93M606.5 78V89M608.5 77V88M610.5 77V86M612.5 83V87M614.5 86V91M616.5 89V93M618.5 88V92M620.5 88V92M622.5 83V91M624.5 87V97M626.5 86V99M628.5 79V89M630.5 77V87M632.5 73V83M634.5 77V86M636.5 79V88M638.5 77V89M640.5 76V84M642.5 75V80M644.5 76V78M646.5 74V78M648.5 76V79M650.5 76V82M652.5 77V85M654.5 77V83M656.5 79V83M658.5 78V89M660.5 77V84M662.5 69V80M664.5 68V77M666.5 66V71M668.5 62V69M670.5 62V73M672.5 66V77M674.5 68V75M676.5 65V74M678.5 59V72M680.5 55V63M682.5 50V61M684.5 49V63M686.5 49V68M688.5 63V73M690.5 59V69M692.5 57V66M694.5 55V63M696.5 52V58M698.5 52V59M700.5 54V60M702.5 51V57M704.5 48V56M706.5 46V55M708.5 44V55M710.5 48V60M712.5 57V65M714.5 52V61M716.5 52V65M718.5 53V66M720.5 60V82M722.5 75V84M724.5 77V84M726.5 76V84M728.5 79V88M730.5 69V84M732.5 73V81M734.5 67V80M736.5 69V80M738.5 71V79M740.5 70V76M742.5 71V77M744.5 73V79M746.5 76V82M748.5 77V84M750.5 77V82M752.5 76V81M754.5 75V81M756.5 76V81M758.5 76V84M760.5 77V82M762.5 76V81M764.5 72V88M766.5 73V87M768.5 73V81M770.5 73V81M772.5 74V85M774.5 81V95M776.5 84V95M778.5 85V93M780.5 87V98M782.5 90V107M784.5 104V124M786.5 117V128M788.5 119V136M790.5 121V130M792.5 120V134M794.5 122V134M796.5 125V138M798.5 124V131M800.5 123V130M802.5 121V130M804.5 127V143M806.5 130V139M808.5 133V141M810.5 134V143M812.5 135V142M814.5 132V140M816.5 128V137M818.5 131V144M820.5 133V147M822.5 128V145M824.5 122V137M826.5 122V139M828.5 130V142M830.5 130V149M832.5 135V143M834.5 135V142M836.5 136V141M838.5 133V137M840.5 131V139M842.5 135V141M844.5 136V150M846.5 131V147M848.5 133V143M850.5 132V141M852.5 133V141M854.5 133V141M856.5 133V141M858.5 133V141M860.5 131V140M862.5 130V141M864.5 120V136M866.5 115V122M868.5 110V119M870.5 106V118M872.5 103V113M874.5 107V121M876.5 104V119M878.5 107V133M880.5 125V135M882.5 126V135M884.5 128V135M886.5 127V133M888.5 128V133M890.5 127V134M892.5 128V134M894.5 127V135M896.5 127V134M898.5 128V138M900.5 127V135M902.5 126V135M904.5 126V134M906.5 125V134M908.5 126V132M910.5 124V133M912.5 122V133M914.5 124V135M916.5 124V130M918.5 123V128" stroke="#00ff00" fill="none"/><path d="M15 41.5h7l-3.5 4z" fill="#fff" shape-rendering="auto"/><rect x="926" y="121" width="39" height="11" fill="#fff"/></svg>
<span class="t" style="top:38.20px;line-height:12px;font-family:'DejaVu Sans Condensed','DejaVu Sans',sans-serif;font-size:9.2px;color:#fff;letter-spacing:0.733px;left:26.60px;">EURJPY,H1</span>
<span class="t" style="top:38.20px;line-height:12px;font-family:'DejaVu Sans Condensed','DejaVu Sans',sans-serif;font-size:9.2px;color:#fff;letter-spacing:-0.115px;left:83.00px;">128.987 129.007 128.938 128.953</span>
<span class="t" style="top:62.80px;line-height:12px;font-family:'DejaVu Sans Condensed','DejaVu Sans',sans-serif;font-size:9.2px;color:#fff;letter-spacing:0.629px;left:19.00px;">SERVER RESPONSE: LICESED EXPIRED!</span>
<span class="t" style="top:38.60px;line-height:12px;font-family:'DejaVu Sans Condensed','DejaVu Sans',sans-serif;font-size:9.2px;color:#fff;letter-spacing:0.069px;left:812.30px;">MasterScalperPRO_fix</span>
<span class="t" style="left:906.8px;top:38.2px;line-height:14px;font-family:'DejaVu Sans',sans-serif;font-size:12px;color:#fff">☺</span>
<div class="clip">
<span class="t" style="top:62.00px;line-height:16px;font-family:'Liberation Sans',sans-serif;font-size:13.6px;color:#fff;left:-189.70px;width:1000px;text-align:right;transform:scaleX(0.9387);transform-origin:right center;">BALANCE</span>
<span class="t" style="top:62.00px;line-height:16px;font-family:'Liberation Sans',sans-serif;font-size:13.6px;color:#fff;left:818.50px;">:</span>
<span class="t" style="top:62.00px;line-height:16px;font-family:'Liberation Sans',sans-serif;font-size:13.6px;color:#fff;left:-87.70px;width:1000px;text-align:right;transform:scaleX(0.9176);transform-origin:right center;">1478.89</span>
<span class="t" style="top:82.00px;line-height:16px;font-family:'Liberation Sans',sans-serif;font-size:13.6px;color:#fff;left:-189.70px;width:1000px;text-align:right;transform:scaleX(0.9387);transform-origin:right center;">EQUITY</span>
<span class="t" style="top:82.00px;line-height:16px;font-family:'Liberation Sans',sans-serif;font-size:13.6px;color:#fff;left:818.50px;">:</span>
<span class="t" style="top:82.00px;line-height:16px;font-family:'Liberation Sans',sans-serif;font-size:13.6px;color:#fff;left:-87.70px;width:1000px;text-align:right;transform:scaleX(0.9176);transform-origin:right center;">1478.89</span>
<span class="t" style="top:102.00px;line-height:16px;font-family:'Liberation Sans',sans-serif;font-size:13.6px;color:#fff;left:-189.70px;width:1000px;text-align:right;transform:scaleX(0.9387);transform-origin:right center;">OPEN ORDERS</span>
<span class="t" style="top:102.00px;line-height:16px;font-family:'Liberation Sans',sans-serif;font-size:13.6px;color:#fff;left:818.50px;">:</span>
<span class="t" style="top:102.00px;line-height:16px;font-family:'Liberation Sans',sans-serif;font-size:13.6px;color:#fff;left:-87.70px;width:1000px;text-align:right;">0</span>
<span class="t" style="top:122.00px;line-height:16px;font-family:'Liberation Sans',sans-serif;font-size:13.6px;color:#fff;left:-189.70px;width:1000px;text-align:right;transform:scaleX(0.9387);transform-origin:right center;">DRAWDOWN</span>
<span class="t" style="top:122.00px;line-height:16px;font-family:'Liberation Sans',sans-serif;font-size:13.6px;color:#fff;left:818.50px;">:</span>
<span class="t" style="top:122.00px;line-height:16px;font-family:'Liberation Sans',sans-serif;font-size:13.6px;color:#fff;left:-87.70px;width:1000px;text-align:right;transform:scaleX(0.9176);transform-origin:right center;">0.00%</span>
<span class="t" style="top:142.00px;line-height:16px;font-family:'Liberation Sans',sans-serif;font-size:13.6px;color:#fff;left:-189.70px;width:1000px;text-align:right;transform:scaleX(0.9387);transform-origin:right center;">FLOATING P/L (EURJPY)</span>
<span class="t" style="top:142.00px;line-height:16px;font-family:'Liberation Sans',sans-serif;font-size:13.6px;color:#fff;left:818.50px;">:</span>
<span class="t" style="top:142.00px;line-height:16px;font-family:'Liberation Sans',sans-serif;font-size:13.6px;color:#fff;left:-87.70px;width:1000px;text-align:right;transform:scaleX(0.9176);transform-origin:right center;">0.00</span>
<span class="t" style="top:162.00px;line-height:16px;font-family:'Liberation Sans',sans-serif;font-size:13.6px;color:#fff;left:-189.70px;width:1000px;text-align:right;transform:scaleX(0.9387);transform-origin:right center;">PROFIT/LOSS (EURJPY)</span>
<span class="t" style="top:162.00px;line-height:16px;font-family:'Liberation Sans',sans-serif;font-size:13.6px;color:#fff;left:818.50px;">:</span>
<span class="t" style="top:162.00px;line-height:16px;font-family:'Liberation Sans',sans-serif;font-size:13.6px;color:#fff;left:-87.70px;width:1000px;text-align:right;transform:scaleX(0.9176);transform-origin:right center;">0.00</span>
<span class="t" style="top:181.00px;line-height:16px;font-family:'Liberation Sans',sans-serif;font-size:13.6px;color:#fff;left:-189.70px;width:1000px;text-align:right;transform:scaleX(0.9387);transform-origin:right center;">PROFIT/LOSS TODAY</span>
<span class="t" style="top:181.00px;line-height:16px;font-family:'Liberation Sans',sans-serif;font-size:13.6px;color:#fff;left:818.50px;">:</span>
<span class="t" style="top:181.00px;line-height:16px;font-family:'Liberation Sans',sans-serif;font-size:13.6px;color:#fff;left:-87.70px;width:1000px;text-align:right;transform:scaleX(0.9176);transform-origin:right center;">306.16</span>
</div>
<span class="t" style="top:189.80px;line-height:12px;font-family:'DejaVu Sans Condensed','DejaVu Sans',sans-serif;font-size:9.2px;color:#fff;letter-spacing:0.035px;left:11.00px;">8 Sep 2021</span>
<span class="t" style="top:189.80px;line-height:12px;font-family:'DejaVu Sans Condensed','DejaVu Sans',sans-serif;font-size:9.2px;color:#fff;letter-spacing:-0.022px;left:75.00px;">10 Sep 00:00</span>
<span class="t" style="top:189.80px;line-height:12px;font-family:'DejaVu Sans Condensed','DejaVu Sans',sans-serif;font-size:9.2px;color:#fff;letter-spacing:-0.022px;left:139.00px;">13 Sep 08:00</span>
<span class="t" style="top:189.80px;line-height:12px;font-family:'DejaVu Sans Condensed','DejaVu Sans',sans-serif;font-size:9.2px;color:#fff;letter-spacing:-0.022px;left:203.00px;">14 Sep 16:00</span>
<span class="t" style="top:189.80px;line-height:12px;font-family:'DejaVu Sans Condensed','DejaVu Sans',sans-serif;font-size:9.2px;color:#fff;letter-spacing:-0.022px;left:267.00px;">16 Sep 00:00</span>
<span class="t" style="top:189.80px;line-height:12px;font-family:'DejaVu Sans Condensed','DejaVu Sans',sans-serif;font-size:9.2px;color:#fff;letter-spacing:-0.022px;left:331.00px;">17 Sep 08:00</span>
<span class="t" style="top:189.80px;line-height:12px;font-family:'DejaVu Sans Condensed','DejaVu Sans',sans-serif;font-size:9.2px;color:#fff;letter-spacing:-0.022px;left:395.00px;">20 Sep 16:00</span>
<span class="t" style="top:189.80px;line-height:12px;font-family:'DejaVu Sans Condensed','DejaVu Sans',sans-serif;font-size:9.2px;color:#fff;letter-spacing:-0.022px;left:459.00px;">22 Sep 00:00</span>
<span class="t" style="top:189.80px;line-height:12px;font-family:'DejaVu Sans Condensed','DejaVu Sans',sans-serif;font-size:9.2px;color:#fff;letter-spacing:-0.022px;left:523.00px;">23 Sep 08:00</span>
<span class="t" style="top:189.80px;line-height:12px;font-family:'DejaVu Sans Condensed','DejaVu Sans',sans-serif;font-size:9.2px;color:#fff;letter-spacing:-0.022px;left:587.00px;">24 Sep 16:00</span>
<span class="t" style="top:189.80px;line-height:12px;font-family:'DejaVu Sans Condensed','DejaVu Sans',sans-serif;font-size:9.2px;color:#fff;letter-spacing:-0.022px;left:651.00px;">28 Sep 00:00</span>
<span class="t" style="top:189.80px;line-height:12px;font-family:'DejaVu Sans Condensed','DejaVu Sans',sans-serif;font-size:9.2px;color:#fff;letter-spacing:-0.022px;left:715.00px;">29 Sep 08:00</span>
<span class="t" style="top:189.80px;line-height:12px;font-family:'DejaVu Sans Condensed','DejaVu Sans',sans-serif;font-size:9.2px;color:#fff;letter-spacing:-0.022px;left:779.00px;">30 Sep 16:00</span>
<span class="t" style="top:189.80px;line-height:12px;font-family:'DejaVu Sans Condensed','DejaVu Sans',sans-serif;font-size:9.2px;color:#fff;letter-spacing:0.082px;left:843.00px;">4 Oct 00:00</span>
<span class="t" style="top:189.80px;line-height:12px;font-family:'DejaVu Sans Condensed','DejaVu Sans',sans-serif;font-size:9.2px;color:#fff;letter-spacing:0.082px;left:907.00px;">5 Oct 08:00</span>
<span class="t" style="top:45.60px;line-height:12px;font-family:'DejaVu Sans Condensed','DejaVu Sans',sans-serif;font-size:9.2px;color:#fff;letter-spacing:-0.203px;left:929.00px;">130.335</span>
<span class="t" style="top:78.60px;line-height:12px;font-family:'DejaVu Sans Condensed','DejaVu Sans',sans-serif;font-size:9.2px;color:#fff;letter-spacing:-0.203px;left:929.00px;">129.735</span>
<span class="t" style="top:111.60px;line-height:12px;font-family:'DejaVu Sans Condensed','DejaVu Sans',sans-serif;font-size:9.2px;color:#fff;letter-spacing:-0.203px;left:929.00px;">129.120</span>
<span class="t" style="top:144.60px;line-height:12px;font-family:'DejaVu Sans Condensed','DejaVu Sans',sans-serif;font-size:9.2px;color:#fff;letter-spacing:-0.203px;left:929.00px;">128.520</span>
<span class="t" style="top:177.60px;line-height:12px;font-family:'DejaVu Sans Condensed','DejaVu Sans',sans-serif;font-size:9.2px;color:#fff;letter-spacing:-0.203px;left:929.00px;">127.905</span>
<span class="t" style="top:120.60px;line-height:12px;font-family:'DejaVu Sans Condensed','DejaVu Sans',sans-serif;font-size:9.2px;color:#000;letter-spacing:-0.203px;left:929.00px;">128.953</span>
</div></div>
<div class="win" style="left:-1px;top:217px">
<div class="wi">
<svg class="a" style="left:9px;top:11px" width="17" height="16" viewBox="9 11 17 16" shape-rendering="crispEdges"><rect x="10.5" y="13" width="11" height="7.5" fill="#fffef4" stroke="#4a86ff"/><rect x="10" y="12" width="12" height="2" fill="#4a86ff"/><path d="M12 16.5h2l1-1 1 2h3" fill="none" stroke="#4a86ff"/><rect x="13.5" y="18" width="10" height="7.5" fill="#fffef4" stroke="#4a86ff"/><rect x="13" y="17" width="11" height="2" fill="#4a86ff"/><path d="M15 20.5l2 3 2-3 2 3" fill="none" stroke="#3a76f0" shape-rendering="auto"/></svg>
<span class="t" style="top:12.10px;line-height:16px;font-family:'Liberation Sans',sans-serif;font-size:12.4px;color:#8c8c8c;left:29.00px;transform:scaleX(0.8512);transform-origin:left center;">GBPUSD,H1</span>
<div class="btn min" style="left:869px;top:10px"></div>
<div class="btn max" style="left:903px;top:10px"></div>
<div class="btn cls" style="left:937px;top:10px"></div>
<svg class="a" style="left:869px;top:10px" width="100" height="18" viewBox="869 10 100 18"><rect x="879.5" y="18.5" width="10" height="3.4" rx="1" fill="#f4f4f4" stroke="#5f6a80" stroke-width="1"/><rect x="913.5" y="14.5" width="10" height="8" rx="1" fill="#f4f4f4" stroke="#5f6a80" stroke-width="1"/><rect x="916.5" y="17.5" width="4" height="2" fill="#cfd9e8" stroke="#5f6a80" stroke-width="1"/><path d="M947.3 14.5l3.4 0 1.8 2.2 1.8-2.2 3.4 0-3.3 4.1 3.3 4.1-3.4 0-1.8-2.2-1.8 2.2-3.4 0 3.3-4.1z" fill="#f6f6f6" stroke="#5f6a80" stroke-width="1" stroke-linejoin="round"/></svg>
<div class="client">
</div>
<svg class="a" style="left:9px;top:33px" width="961" height="174" viewBox="9 33 961 174" shape-rendering="crispEdges"><path d="M44.5 35V186M76.5 35V186M108.5 35V186M140.5 35V186M172.5 35V186M204.5 35V186M236.5 35V186M268.5 35V186M300.5 35V186M332.5 35V186M364.5 35V186M396.5 35V186M428.5 35V186M460.5 35V186M492.5 35V186M524.5 35V186M556.5 35V186M588.5 35V186M620.5 35V186M652.5 35V186M684.5 35V186M716.5 35V186M748.5 35V186M780.5 35V186M812.5 35V186M844.5 35V186M876.5 35V186M908.5 35V186" stroke="#778899" stroke-dasharray="3 3" fill="none"/><path d="M13 51.5H923M13 84.5H923M13 117.5H923M13 150.5H923M13 183.5H923" stroke="#778899" stroke-dasharray="3 3" fill="none"/><path d="M12 124.5H923" stroke="#8496aa" fill="none"/><path d="M11.5 35V187M11 35.5H924M923.5 35V187M11 186.5H924" stroke="#fff" fill="none"/><path d="M12.5 187V190M76.5 187V190M140.5 187V190M204.5 187V190M268.5 187V190M332.5 187V190M396.5 187V190M460.5 187V190M524.5 187V190M588.5 187V190M652.5 187V190M716.5 187V190M780.5 187V190M844.5 187V190M908.5 187V190M924 51.5H926M924 84.5H926M924 117.5H926M924 150.5H926M924 183.5H926" stroke="#fff" fill="none"/><g shape-rendering="auto"><circle cx="912" cy="123.6" r="10.2" fill="#a39282" stroke="#8797ae" stroke-width="1.2"/><path d="M907.5 118.1l7 5-7 6z" fill="#fff"/><path d="M909 121.6l8 0-7 6z" fill="#00e400"/><path d="M913.5 121.0h5.5" stroke="#1a2cff" stroke-width="1.3"/><path d="M911.5 122.3h7.5" stroke="#ff1a1a" stroke-width="1.2"/></g><path d="M12.5 84V90M14.5 84V95M16.5 81V93M18.5 79V86M20.5 79V85M22.5 79V83M24.5 79V83M26.5 81V84M28.5 81V83M30.5 81V84M32.5 84V86M34.5 84V87M36.5 83V87M38.5 82V87M40.5 83V86M42.5 84V89M44.5 82V89M46.5 81V87M48.5 77V86M50.5 70V78M52.5 68V74M54.5 65V73M56.5 64V73M58.5 64V70M60.5 61V66M62.5 61V65M64.5 60V65M66.5 58V63M68.5 57V63M70.5 61V65M72.5 62V65M74.5 63V66M76.5 64V66M78.5 64V67M80.5 62V65M82.5 62V66M84.5 60V64M86.5 61V65M88.5 60V64M90.5 60V65M92.5 60V65M94.5 58V64M96.5 53V61M98.5 51V56M100.5 52V56M102.5 53V58M104.5 51V56M106.5 50V55M108.5 53V61M110.5 55V63M112.5 56V63M114.5 58V65M116.5 59V65M118.5 61V67M120.5 62V67M122.5 64V66M124.5 64V67M126.5 64V68M128.5 64V67M130.5 64V67M132.5 63V68M134.5 63V67M136.5 62V67M138.5 64V70M140.5 64V70M142.5 67V73M144.5 70V77M146.5 67V73M148.5 67V72M150.5 66V71M152.5 65V70M154.5 64V69M156.5 62V68M158.5 61V66M160.5 60V66M162.5 61V66M164.5 62V67M166.5 64V67M168.5 63V67M170.5 63V67M172.5 63V66M174.5 63V67M176.5 62V66M178.5 61V66M180.5 61V66M182.5 61V65M184.5 61V66M186.5 61V65M188.5 61V65M190.5 56V63M192.5 53V61M194.5 51V58M196.5 53V59M198.5 54V61M200.5 55V61M202.5 45V62M204.5 44V55M206.5 53V64M208.5 59V64M210.5 60V64M212.5 61V65M214.5 64V72M216.5 72V75M218.5 72V74M220.5 72V75M222.5 71V75M224.5 72V75M226.5 73V75M228.5 73V75M230.5 73V78M232.5 73V77M234.5 72V75M236.5 70V76M238.5 65V71M240.5 64V68M242.5 63V67M244.5 64V69M246.5 65V71M248.5 67V72M250.5 66V72M252.5 60V70M254.5 62V69M256.5 63V69M258.5 64V69M260.5 63V69M262.5 64V67M264.5 62V66M266.5 62V66M268.5 63V68M270.5 60V64M272.5 59V64M274.5 61V64M276.5 61V65M278.5 63V66M280.5 63V66M282.5 64V67M284.5 64V70M286.5 65V72M288.5 65V72M290.5 66V73M292.5 68V74M294.5 67V72M296.5 63V71M298.5 64V76M300.5 73V85M302.5 80V84M304.5 80V83M306.5 78V83M308.5 78V82M310.5 77V81M312.5 75V79M314.5 75V78M316.5 76V83M318.5 76V79M320.5 75V78M322.5 75V80M324.5 75V79M326.5 75V80M328.5 74V78M330.5 74V78M332.5 72V77M334.5 73V78M336.5 74V78M338.5 71V79M340.5 73V81M342.5 75V81M344.5 75V82M346.5 73V78M348.5 72V84M350.5 81V92M352.5 82V91M354.5 85V89M356.5 87V91M358.5 89V91M360.5 89V93M362.5 91V95M364.5 89V96M366.5 91V96M368.5 94V97M370.5 95V99M372.5 96V101M374.5 99V103M376.5 100V102M378.5 98V102M380.5 98V104M382.5 99V106M384.5 105V113M386.5 107V114M388.5 108V114M390.5 102V111M392.5 104V115M394.5 106V118M396.5 106V116M398.5 108V117M400.5 108V116M402.5 112V118M404.5 113V120M406.5 112V119M408.5 112V118M410.5 112V115M412.5 113V118M414.5 115V119M416.5 112V116M418.5 112V117M420.5 110V117M422.5 109V116M424.5 110V114M426.5 109V113M428.5 109V112M430.5 107V113M432.5 105V112M434.5 104V109M436.5 104V109M438.5 105V110M440.5 105V110M442.5 105V112M444.5 107V114M446.5 111V120M448.5 112V117M450.5 112V117M452.5 112V117M454.5 110V116M456.5 109V113M458.5 111V115M460.5 112V118M462.5 113V115M464.5 112V116M466.5 112V115M468.5 108V115M470.5 112V118M472.5 112V117M474.5 114V118M476.5 114V117M478.5 113V117M480.5 113V122M482.5 114V122M484.5 118V123M486.5 116V121M488.5 117V121M490.5 118V127M492.5 116V124M494.5 115V121M496.5 111V117M498.5 112V118M500.5 115V118M502.5 105V128M504.5 116V127M506.5 121V127M508.5 124V128M510.5 124V127M512.5 124V128M514.5 124V128M516.5 122V126M518.5 121V125M520.5 118V124M522.5 116V121M524.5 115V121M526.5 114V120M528.5 114V118M530.5 112V117M532.5 109V117M534.5 107V115M536.5 97V112M538.5 95V103M540.5 89V101M542.5 88V97M544.5 89V95M546.5 88V92M548.5 91V95M550.5 92V96M552.5 93V97M554.5 94V99M556.5 95V100M558.5 95V98M560.5 94V98M562.5 92V98M564.5 94V99M566.5 95V99M568.5 95V98M570.5 95V98M572.5 94V98M574.5 95V100M576.5 96V102M578.5 97V103M580.5 97V104M582.5 101V107M584.5 102V110M586.5 104V113M588.5 104V115M590.5 104V112M592.5 104V111M594.5 105V110M596.5 109V114M598.5 110V115M600.5 110V115M602.5 109V113M604.5 111V114M606.5 111V115M608.5 110V114M610.5 109V113M612.5 108V112M614.5 108V112M616.5 109V113M618.5 107V112M620.5 107V111M622.5 107V115M624.5 103V114M626.5 101V108M628.5 102V108M630.5 101V107M632.5 98V107M634.5 98V109M636.5 97V106M638.5 94V103M640.5 98V104M642.5 98V103M644.5 99V103M646.5 98V102M648.5 99V103M650.5 100V103M652.5 101V105M654.5 100V103M656.5 101V104M658.5 101V105M660.5 103V107M662.5 101V105M664.5 100V103M666.5 99V103M668.5 98V101M670.5 98V107M672.5 104V112M674.5 109V116M676.5 109V120M678.5 118V132M680.5 127V133M682.5 132V149M684.5 142V149M686.5 145V151M688.5 145V150M690.5 145V149M692.5 146V150M694.5 145V151M696.5 145V150M698.5 144V150M700.5 147V150M702.5 146V150M704.5 145V151M706.5 146V151M708.5 145V149M710.5 144V149M712.5 144V150M714.5 144V149M716.5 143V149M718.5 142V148M720.5 144V157M722.5 149V159M724.5 150V158M726.5 150V159M728.5 154V164M730.5 161V170M732.5 163V173M734.5 168V177M736.5 172V181M738.5 173V182M740.5 175V183M742.5 176V181M744.5 176V183M746.5 177V181M748.5 176V180M750.5 175V180M752.5 174V179M754.5 173V178M756.5 173V177M758.5 171V175M760.5 171V174M762.5 169V174M764.5 169V177M766.5 171V181M768.5 171V182M770.5 169V176M772.5 169V176M774.5 168V174M776.5 165V177M778.5 162V172M780.5 159V169M782.5 158V167M784.5 154V169M786.5 164V171M788.5 164V171M790.5 164V171M792.5 161V170M794.5 161V169M796.5 164V169M798.5 164V169M800.5 164V171M802.5 165V171M804.5 168V174M806.5 169V175M808.5 169V174M810.5 168V174M812.5 169V174M814.5 167V176M816.5 167V177M818.5 163V173M820.5 156V167M822.5 150V159M824.5 145V152M826.5 143V151M828.5 138V149M830.5 138V147M832.5 136V145M834.5 137V142M836.5 139V144M838.5 140V146M840.5 141V147M842.5 143V147M844.5 139V148M846.5 138V148M848.5 138V143M850.5 136V141M852.5 142V149M854.5 143V149M856.5 145V149M858.5 144V149M860.5 144V148M862.5 143V148M864.5 140V150M866.5 138V146M868.5 136V144M870.5 132V140M872.5 129V135M874.5 127V132M876.5 124V130M878.5 119V129M880.5 125V130M882.5 125V129M884.5 125V129M886.5 126V129M888.5 126V129M890.5 126V130M892.5 126V130M894.5 125V131M896.5 126V130M898.5 127V132M900.5 129V135M902.5 130V133M904.5 129V134M906.5 130V135M908.5 129V135M910.5 127V133M912.5 125V132M914.5 123V129M916.5 122V128M918.5 122V127" stroke="#00ff00" fill="none"/><path d="M15 41.5h7l-3.5 4z" fill="#fff" shape-rendering="auto"/><rect x="926" y="119" width="39" height="11" fill="#fff"/></svg>
<span class="t" style="top:38.20px;line-height:12px;font-family:'DejaVu Sans Condensed','DejaVu Sans',sans-serif;font-size:9.2px;color:#fff;letter-spacing:0.513px;left:26.60px;">GBPUSD,H1</span>
<span class="t" style="top:38.20px;line-height:12px;font-family:'DejaVu Sans Condensed','DejaVu Sans',sans-serif;font-size:9.2px;color:#fff;letter-spacing:-0.115px;left:87.20px;">1.36252 1.36252 1.36146 1.36209</span>
<span class="t" style="top:62.80px;line-height:12px;font-family:'DejaVu Sans Condensed','DejaVu Sans',sans-serif;font-size:9.2px;color:#fff;letter-spacing:0.629px;left:19.00px;">SERVER RESPONSE: LICESED EXPIRED!</span>
<span class="t" style="top:38.60px;line-height:12px;font-family:'DejaVu Sans Condensed','DejaVu Sans',sans-serif;font-size:9.2px;color:#fff;letter-spacing:0.069px;left:812.30px;">MasterScalperPRO_fix</span>
<span class="t" style="left:906.8px;top:38.2px;line-height:14px;font-family:'DejaVu Sans',sans-serif;font-size:12px;color:#fff">☺</span>
<div class="clip">
<span class="t" style="top:62.00px;line-height:16px;font-family:'Liberation Sans',sans-serif;font-size:13.6px;color:#fff;left:-189.70px;width:1000px;text-align:right;transform:scaleX(0.9387);transform-origin:right center;">BALANCE</span>
<span class="t" style="top:62.00px;line-height:16px;font-family:'Liberation Sans',sans-serif;font-size:13.6px;color:#fff;left:818.50px;">:</span>
<span class="t" style="top:62.00px;line-height:16px;font-family:'Liberation Sans',sans-serif;font-size:13.6px;color:#fff;left:-87.70px;width:1000px;text-align:right;transform:scaleX(0.9176);transform-origin:right center;">1478.89</span>
<span class="t" style="top:82.00px;line-height:16px;font-family:'Liberation Sans',sans-serif;font-size:13.6px;color:#fff;left:-189.70px;width:1000px;text-align:right;transform:scaleX(0.9387);transform-origin:right center;">EQUITY</span>
<span class="t" style="top:82.00px;line-height:16px;font-family:'Liberation Sans',sans-serif;font-size:13.6px;color:#fff;left:818.50px;">:</span>
<span class="t" style="top:82.00px;line-height:16px;font-family:'Liberation Sans',sans-serif;font-size:13.6px;color:#fff;left:-87.70px;width:1000px;text-align:right;transform:scaleX(0.9176);transform-origin:right center;">1478.89</span>
<span class="t" style="top:102.00px;line-height:16px;font-family:'Liberation Sans',sans-serif;font-size:13.6px;color:#fff;left:-189.70px;width:1000px;text-align:right;transform:scaleX(0.9387);transform-origin:right center;">OPEN ORDERS</span>
<span class="t" style="top:102.00px;line-height:16px;font-family:'Liberation Sans',sans-serif;font-size:13.6px;color:#fff;left:818.50px;">:</span>
<span class="t" style="top:102.00px;line-height:16px;font-family:'Liberation Sans',sans-serif;font-size:13.6px;color:#fff;left:-87.70px;width:1000px;text-align:right;">0</span>
<span class="t" style="top:122.00px;line-height:16px;font-family:'Liberation Sans',sans-serif;font-size:13.6px;color:#fff;left:-189.70px;width:1000px;text-align:right;transform:scaleX(0.9387);transform-origin:right center;">DRAWDOWN</span>
<span class="t" style="top:122.00px;line-height:16px;font-family:'Liberation Sans',sans-serif;font-size:13.6px;color:#fff;left:818.50px;">:</span>
<span class="t" style="top:122.00px;line-height:16px;font-family:'Liberation Sans',sans-serif;font-size:13.6px;color:#fff;left:-87.70px;width:1000px;text-align:right;transform:scaleX(0.9176);transform-origin:right center;">0.00%</span>
<span class="t" style="top:142.00px;line-height:16px;font-family:'Liberation Sans',sans-serif;font-size:13.6px;color:#fff;left:-189.70px;width:1000px;text-align:right;transform:scaleX(0.9387);transform-origin:right center;">FLOATING P/L (GBPUSD)</span>
<span class="t" style="top:142.00px;line-height:16px;font-family:'Liberation Sans',sans-serif;font-size:13.6px;color:#fff;left:818.50px;">:</span>
<span class="t" style="top:142.00px;line-height:16px;font-family:'Liberation Sans',sans-serif;font-size:13.6px;color:#fff;left:-87.70px;width:1000px;text-align:right;transform:scaleX(0.9176);transform-origin:right center;">0.00</span>
<span class="t" style="top:162.00px;line-height:16px;font-family:'Liberation Sans',sans-serif;font-size:13.6px;color:#fff;left:-189.70px;width:1000px;text-align:right;transform:scaleX(0.9387);transform-origin:right center;">PROFIT/LOSS (GBPUSD)</span>
<span class="t" style="top:162.00px;line-height:16px;font-family:'Liberation Sans',sans-serif;font-size:13.6px;color:#fff;left:818.50px;">:</span>
<span class="t" style="top:162.00px;line-height:16px;font-family:'Liberation Sans',sans-serif;font-size:13.6px;color:#fff;left:-87.70px;width:1000px;text-align:right;transform:scaleX(0.9176);transform-origin:right center;">108.12</span>
<span class="t" style="top:181.00px;line-height:16px;font-family:'Liberation Sans',sans-serif;font-size:13.6px;color:#fff;left:-189.70px;width:1000px;text-align:right;transform:scaleX(0.9387);transform-origin:right center;">PROFIT/LOSS TODAY</span>
<span class="t" style="top:181.00px;line-height:16px;font-family:'Liberation Sans',sans-serif;font-size:13.6px;color:#fff;left:818.50px;">:</span>
<span class="t" style="top:181.00px;line-height:16px;font-family:'Liberation Sans',sans-serif;font-size:13.6px;color:#fff;left:-87.70px;width:1000px;text-align:right;transform:scaleX(0.9176);transform-origin:right center;">306.16</span>
</div>
<span class="t" style="top:189.80px;line-height:12px;font-family:'DejaVu Sans Condensed','DejaVu Sans',sans-serif;font-size:9.2px;color:#fff;letter-spacing:0.035px;left:11.00px;">8 Sep 2021</span>
<span class="t" style="top:189.80px;line-height:12px;font-family:'DejaVu Sans Condensed','DejaVu Sans',sans-serif;font-size:9.2px;color:#fff;letter-spacing:-0.022px;left:75.00px;">10 Sep 00:00</span>
<span class="t" style="top:189.80px;line-height:12px;font-family:'DejaVu Sans Condensed','DejaVu Sans',sans-serif;font-size:9.2px;color:#fff;letter-spacing:-0.022px;left:139.00px;">13 Sep 08:00</span>
<span class="t" style="top:189.80px;line-height:12px;font-family:'DejaVu Sans Condensed','DejaVu Sans',sans-serif;font-size:9.2px;color:#fff;letter-spacing:-0.022px;left:203.00px;">14 Sep 16:00</span>
<span class="t" style="top:189.80px;line-height:12px;font-family:'DejaVu Sans Condensed','DejaVu Sans',sans-serif;font-size:9.2px;color:#fff;letter-spacing:-0.022px;left:267.00px;">16 Sep 00:00</span>
<span class="t" style="top:189.80px;line-height:12px;font-family:'DejaVu Sans Condensed','DejaVu Sans',sans-serif;font-size:9.2px;color:#fff;letter-spacing:-0.022px;left:331.00px;">17 Sep 08:00</span>
<span class="t" style="top:189.80px;line-height:12px;font-family:'DejaVu Sans Condensed','DejaVu Sans',sans-serif;font-size:9.2px;color:#fff;letter-spacing:-0.022px;left:395.00px;">20 Sep 16:00</span>
<span class="t" style="top:189.80px;line-height:12px;font-family:'DejaVu Sans Condensed','DejaVu Sans',sans-serif;font-size:9.2px;color:#fff;letter-spacing:-0.022px;left:459.00px;">22 Sep 00:00</span>
<span class="t" style="top:189.80px;line-height:12px;font-family:'DejaVu Sans Condensed','DejaVu Sans',sans-serif;font-size:9.2px;color:#fff;letter-spacing:-0.022px;left:523.00px;">23 Sep 08:00</span>
<span class="t" style="top:189.80px;line-height:12px;font-family:'DejaVu Sans Condensed','DejaVu Sans',sans-serif;font-size:9.2px;color:#fff;letter-spacing:-0.022px;left:587.00px;">24 Sep 16:00</span>
<span class="t" style="top:189.80px;line-height:12px;font-family:'DejaVu Sans Condensed','DejaVu Sans',sans-serif;font-size:9.2px;color:#fff;letter-spacing:-0.022px;left:651.00px;">28 Sep 00:00</span>
<span class="t" style="top:189.80px;line-height:12px;font-family:'DejaVu Sans Condensed','DejaVu Sans',sans-serif;font-size:9.2px;color:#fff;letter-spacing:-0.022px;left:715.00px;">29 Sep 08:00</span>
<span class="t" style="top:189.80px;line-height:12px;font-family:'DejaVu Sans Condensed','DejaVu Sans',sans-serif;font-size:9.2px;color:#fff;letter-spacing:-0.022px;left:779.00px;">30 Sep 16:00</span>
<span class="t" style="top:189.80px;line-height:12px;font-family:'DejaVu Sans Condensed','DejaVu Sans',sans-serif;font-size:9.2px;color:#fff;letter-spacing:0.082px;left:843.00px;">4 Oct 00:00</span>
<span class="t" style="top:189.80px;line-height:12px;font-family:'DejaVu Sans Condensed','DejaVu Sans',sans-serif;font-size:9.2px;color:#fff;letter-spacing:0.082px;left:907.00px;">5 Oct 08:00</span>
<span class="t" style="top:45.60px;line-height:12px;font-family:'DejaVu Sans Condensed','DejaVu Sans',sans-serif;font-size:9.2px;color:#fff;letter-spacing:-0.203px;left:929.00px;">1.38855</span>
<span class="t" style="top:78.60px;line-height:12px;font-family:'DejaVu Sans Condensed','DejaVu Sans',sans-serif;font-size:9.2px;color:#fff;letter-spacing:-0.203px;left:929.00px;">1.37665</span>
<span class="t" style="top:111.60px;line-height:12px;font-family:'DejaVu Sans Condensed','DejaVu Sans',sans-serif;font-size:9.2px;color:#fff;letter-spacing:-0.203px;left:929.00px;">1.36475</span>
<span class="t" style="top:144.60px;line-height:12px;font-family:'DejaVu Sans Condensed','DejaVu Sans',sans-serif;font-size:9.2px;color:#fff;letter-spacing:-0.203px;left:929.00px;">1.35285</span>
<span class="t" style="top:177.60px;line-height:12px;font-family:'DejaVu Sans Condensed','DejaVu Sans',sans-serif;font-size:9.2px;color:#fff;letter-spacing:-0.203px;left:929.00px;">1.34095</span>
<span class="t" style="top:118.60px;line-height:12px;font-family:'DejaVu Sans Condensed','DejaVu Sans',sans-serif;font-size:9.2px;color:#000;letter-spacing:-0.203px;left:929.00px;">1.36209</span>
</div></div>
<div class="win" style="left:979px;top:217px">
<div class="wi">
<svg class="a" style="left:9px;top:11px" width="17" height="16" viewBox="9 11 17 16" shape-rendering="crispEdges"><rect x="10.5" y="13" width="11" height="7.5" fill="#fffef4" stroke="#4a86ff"/><rect x="10" y="12" width="12" height="2" fill="#4a86ff"/><path d="M12 16.5h2l1-1 1 2h3" fill="none" stroke="#4a86ff"/><rect x="13.5" y="18" width="10" height="7.5" fill="#fffef4" stroke="#4a86ff"/><rect x="13" y="17" width="11" height="2" fill="#4a86ff"/><path d="M15 20.5l2 3 2-3 2 3" fill="none" stroke="#3a76f0" shape-rendering="auto"/></svg>
<span class="t" style="top:12.10px;line-height:16px;font-family:'Liberation Sans',sans-serif;font-size:12.4px;color:#8c8c8c;left:29.00px;transform:scaleX(0.9156);transform-origin:left center;">GBPJPY,H1</span>
<div class="btn min" style="left:869px;top:10px"></div>
<div class="btn max" style="left:903px;top:10px"></div>
<div class="btn cls" style="left:937px;top:10px"></div>
<svg class="a" style="left:869px;top:10px" width="100" height="18" viewBox="869 10 100 18"><rect x="879.5" y="18.5" width="10" height="3.4" rx="1" fill="#f4f4f4" stroke="#5f6a80" stroke-width="1"/><rect x="913.5" y="14.5" width="10" height="8" rx="1" fill="#f4f4f4" stroke="#5f6a80" stroke-width="1"/><rect x="916.5" y="17.5" width="4" height="2" fill="#cfd9e8" stroke="#5f6a80" stroke-width="1"/><path d="M947.3 14.5l3.4 0 1.8 2.2 1.8-2.2 3.4 0-3.3 4.1 3.3 4.1-3.4 0-1.8-2.2-1.8 2.2-3.4 0 3.3-4.1z" fill="#f6f6f6" stroke="#5f6a80" stroke-width="1" stroke-linejoin="round"/></svg>
<div class="client">
</div>
<svg class="a" style="left:9px;top:33px" width="961" height="174" viewBox="9 33 961 174" shape-rendering="crispEdges"><path d="M44.5 35V186M76.5 35V186M108.5 35V186M140.5 35V186M172.5 35V186M204.5 35V186M236.5 35V186M268.5 35V186M300.5 35V186M332.5 35V186M364.5 35V186M396.5 35V186M428.5 35V186M460.5 35V186M492.5 35V186M524.5 35V186M556.5 35V186M588.5 35V186M620.5 35V186M652.5 35V186M684.5 35V186M716.5 35V186M748.5 35V186M780.5 35V186M812.5 35V186M844.5 35V186M876.5 35V186M908.5 35V186" stroke="#778899" stroke-dasharray="3 3" fill="none"/><path d="M13 51.5H923M13 84.5H923M13 117.5H923M13 150.5H923M13 183.5H923" stroke="#778899" stroke-dasharray="3 3" fill="none"/><path d="M12 93.5H923" stroke="#8496aa" fill="none"/><path d="M11.5 35V187M11 35.5H924M923.5 35V187M11 186.5H924" stroke="#fff" fill="none"/><path d="M12.5 187V190M76.5 187V190M140.5 187V190M204.5 187V190M268.5 187V190M332.5 187V190M396.5 187V190M460.5 187V190M524.5 187V190M588.5 187V190M652.5 187V190M716.5 187V190M780.5 187V190M844.5 187V190M908.5 187V190M924 51.5H926M924 84.5H926M924 117.5H926M924 150.5H926M924 183.5H926" stroke="#fff" fill="none"/><g shape-rendering="auto"><circle cx="910.5" cy="98" r="11.6" fill="#a39282" stroke="#8797ae" stroke-width="1.2"/><path d="M905.0 97l4-5.5 4 3 1.5 6-3 4.5-5 0-1.5-4z" fill="#fff"/><path d="M909.0 97h7.5l-5.5 5.5z" fill="#00e400"/><path d="M906.0 100.5l3 0 1 3-3.5 .5z" fill="#00e400"/><path d="M909.5 96.4h7" stroke="#ff1a1a" stroke-width="1.2"/><path d="M912.0 95.2h3" stroke="#1a2cff" stroke-width="1.2"/></g><path d="M12.5 80V88M14.5 76V93M16.5 78V90M18.5 75V82M20.5 77V80M22.5 77V80M24.5 78V81M26.5 77V80M28.5 78V83M30.5 78V84M32.5 80V87M34.5 82V88M36.5 84V89M38.5 83V90M40.5 84V88M42.5 85V93M44.5 84V92M46.5 85V93M48.5 86V95M50.5 81V90M52.5 76V86M54.5 73V84M56.5 73V81M58.5 70V78M60.5 70V76M62.5 71V78M64.5 70V78M66.5 72V77M68.5 75V83M70.5 77V83M72.5 78V83M74.5 78V84M76.5 77V83M78.5 77V81M80.5 75V80M82.5 76V81M84.5 75V83M86.5 72V79M88.5 69V74M90.5 68V74M92.5 66V71M94.5 60V69M96.5 52V64M98.5 51V60M100.5 51V58M102.5 53V58M104.5 52V59M106.5 54V61M108.5 55V63M110.5 60V68M112.5 61V70M114.5 62V70M116.5 66V72M118.5 68V73M120.5 67V77M122.5 70V77M124.5 71V76M126.5 72V78M128.5 70V75M130.5 69V75M132.5 67V75M134.5 69V75M136.5 68V76M138.5 68V75M140.5 70V79M142.5 67V76M144.5 66V75M146.5 67V73M148.5 64V73M150.5 64V72M152.5 63V71M154.5 62V71M156.5 61V71M158.5 66V78M160.5 66V73M162.5 66V72M164.5 66V71M166.5 66V71M168.5 66V71M170.5 64V70M172.5 65V70M174.5 64V69M176.5 64V68M178.5 63V67M180.5 58V67M182.5 58V65M184.5 58V64M186.5 58V64M188.5 57V64M190.5 57V64M192.5 50V60M194.5 48V56M196.5 48V56M198.5 47V56M200.5 47V56M202.5 44V57M204.5 46V61M206.5 59V81M208.5 76V84M210.5 74V81M212.5 80V89M214.5 84V95M216.5 93V99M218.5 93V98M220.5 93V96M222.5 93V95M224.5 91V98M226.5 90V101M228.5 96V103M230.5 97V106M232.5 95V103M234.5 96V101M236.5 95V102M238.5 93V100M240.5 89V100M242.5 93V99M244.5 98V105M246.5 101V109M248.5 104V113M250.5 102V115M252.5 93V108M254.5 94V106M256.5 94V107M258.5 96V102M260.5 94V101M262.5 94V99M264.5 93V98M266.5 94V98M268.5 95V100M270.5 92V97M272.5 92V97M274.5 89V95M276.5 92V102M278.5 99V104M280.5 100V103M282.5 101V104M284.5 103V109M286.5 101V108M288.5 99V109M290.5 103V109M292.5 102V107M294.5 102V107M296.5 95V104M298.5 90V103M300.5 94V108M302.5 104V115M304.5 103V114M306.5 101V107M308.5 99V105M310.5 99V102M312.5 95V101M314.5 95V99M316.5 97V104M318.5 95V100M320.5 94V98M322.5 95V99M324.5 90V98M326.5 89V94M328.5 89V93M330.5 87V91M332.5 83V88M334.5 85V91M336.5 84V93M338.5 78V90M340.5 82V92M342.5 84V93M344.5 82V88M346.5 79V84M348.5 76V94M350.5 90V108M352.5 100V107M354.5 96V104M356.5 101V108M358.5 106V110M360.5 104V110M362.5 108V112M364.5 105V114M366.5 109V115M368.5 109V115M370.5 109V112M372.5 109V120M374.5 118V124M376.5 118V123M378.5 118V124M380.5 119V124M382.5 120V133M384.5 132V147M386.5 142V152M388.5 142V153M390.5 138V147M392.5 145V160M394.5 152V167M396.5 143V158M398.5 145V161M400.5 152V164M402.5 161V171M404.5 164V175M406.5 165V174M408.5 161V175M410.5 164V169M412.5 165V172M414.5 161V169M416.5 161V169M418.5 156V168M420.5 154V163M422.5 152V158M424.5 150V157M426.5 148V153M428.5 149V158M430.5 147V158M432.5 141V150M434.5 140V150M436.5 144V150M438.5 144V154M440.5 149V160M442.5 154V169M444.5 162V177M446.5 166V183M448.5 166V183M450.5 165V172M452.5 170V175M454.5 169V175M456.5 168V173M458.5 173V176M460.5 173V178M462.5 171V175M464.5 173V180M466.5 171V181M468.5 154V177M470.5 162V168M472.5 163V167M474.5 162V168M476.5 157V163M478.5 158V164M480.5 157V174M482.5 166V173M484.5 165V172M486.5 161V172M488.5 164V170M490.5 165V173M492.5 165V172M494.5 158V169M496.5 152V161M498.5 151V158M500.5 153V161M502.5 146V165M504.5 152V165M506.5 160V165M508.5 161V168M510.5 160V164M512.5 160V164M514.5 158V162M516.5 153V161M518.5 152V158M520.5 150V156M522.5 150V155M524.5 149V154M526.5 143V153M528.5 139V147M530.5 135V144M532.5 130V140M534.5 130V149M536.5 111V140M538.5 106V120M540.5 98V115M542.5 96V106M544.5 94V102M546.5 92V97M548.5 94V98M550.5 95V100M552.5 94V99M554.5 94V99M556.5 95V100M558.5 95V99M560.5 94V98M562.5 86V98M564.5 87V98M566.5 94V98M568.5 88V95M570.5 89V92M572.5 89V93M574.5 83V92M576.5 84V96M578.5 92V106M580.5 93V101M582.5 95V101M584.5 100V104M586.5 104V109M588.5 89V109M590.5 90V99M592.5 92V102M594.5 89V94M596.5 91V98M598.5 95V98M600.5 95V99M602.5 92V97M604.5 97V105M606.5 93V104M608.5 93V99M610.5 92V99M612.5 95V99M614.5 96V105M616.5 102V106M618.5 101V104M620.5 97V104M622.5 94V104M624.5 88V102M626.5 71V93M628.5 72V81M630.5 72V78M632.5 68V77M634.5 68V83M636.5 72V79M638.5 67V75M640.5 67V74M642.5 69V73M644.5 69V74M646.5 67V72M648.5 67V70M650.5 68V71M652.5 70V75M654.5 70V74M656.5 69V75M658.5 69V78M660.5 68V76M662.5 61V69M664.5 58V64M666.5 57V61M668.5 55V61M670.5 54V61M672.5 58V72M674.5 68V75M676.5 67V81M678.5 78V93M680.5 84V95M682.5 90V109M684.5 101V112M686.5 105V126M688.5 113V122M690.5 115V121M692.5 112V121M694.5 109V117M696.5 107V115M698.5 109V112M700.5 111V118M702.5 109V114M704.5 107V111M706.5 104V110M708.5 102V111M710.5 106V112M712.5 106V113M714.5 106V111M716.5 105V112M718.5 108V114M720.5 113V129M722.5 124V135M724.5 126V136M726.5 123V134M728.5 131V142M730.5 132V144M732.5 134V143M734.5 133V147M736.5 134V139M738.5 132V143M740.5 129V136M742.5 128V137M744.5 130V138M746.5 129V137M748.5 129V137M750.5 129V135M752.5 127V136M754.5 125V136M756.5 126V134M758.5 123V134M760.5 123V132M762.5 123V132M764.5 126V137M766.5 125V134M768.5 124V132M770.5 126V137M772.5 120V130M774.5 120V129M776.5 120V130M778.5 112V126M780.5 113V128M782.5 112V124M784.5 120V138M786.5 136V146M788.5 138V150M790.5 136V146M792.5 138V147M794.5 142V148M796.5 141V146M798.5 140V146M800.5 141V149M802.5 139V150M804.5 146V160M806.5 152V159M808.5 154V162M810.5 157V163M812.5 157V163M814.5 154V168M816.5 149V174M818.5 149V164M820.5 146V155M822.5 133V150M824.5 123V140M826.5 123V139M828.5 118V127M830.5 119V138M832.5 120V139M834.5 120V127M836.5 123V129M838.5 124V130M840.5 123V132M842.5 128V132M844.5 129V139M846.5 123V137M848.5 122V129M850.5 123V132M852.5 129V138M854.5 129V137M856.5 129V137M858.5 129V137M860.5 126V136M862.5 127V137M864.5 117V136M866.5 115V123M868.5 103V118M870.5 100V109M872.5 100V109M874.5 103V114M876.5 92V115M878.5 94V117M880.5 109V121M882.5 109V116M884.5 109V117M886.5 109V114M888.5 106V113M890.5 108V114M892.5 112V115M894.5 107V114M896.5 108V114M898.5 109V119M900.5 108V118M902.5 105V110M904.5 102V109M906.5 100V107M908.5 97V105M910.5 97V104M912.5 96V103M914.5 95V101M916.5 94V99M918.5 94V97" stroke="#00ff00" fill="none"/><path d="M15 41.5h7l-3.5 4z" fill="#fff" shape-rendering="auto"/><rect x="926" y="88" width="39" height="11" fill="#fff"/></svg>
<span class="t" style="top:38.20px;line-height:12px;font-family:'DejaVu Sans Condensed','DejaVu Sans',sans-serif;font-size:9.2px;color:#fff;letter-spacing:0.727px;left:26.60px;">GBPJPY,H1</span>
<span class="t" style="top:38.20px;line-height:12px;font-family:'DejaVu Sans Condensed','DejaVu Sans',sans-serif;font-size:9.2px;color:#fff;letter-spacing:-0.115px;left:83.00px;">151.469 151.470 151.359 151.446</span>
<span class="t" style="top:62.80px;line-height:12px;font-family:'DejaVu Sans Condensed','DejaVu Sans',sans-serif;font-size:9.2px;color:#fff;letter-spacing:0.629px;left:19.00px;">SERVER RESPONSE: LICESED EXPIRED!</span>
<span class="t" style="top:38.60px;line-height:12px;font-family:'DejaVu Sans Condensed','DejaVu Sans',sans-serif;font-size:9.2px;color:#fff;letter-spacing:0.069px;left:812.30px;">MasterScalperPRO_fix</span>
<span class="t" style="left:906.8px;top:38.2px;line-height:14px;font-family:'DejaVu Sans',sans-serif;font-size:12px;color:#fff">☺</span>
<div class="clip">
<span class="t" style="top:62.00px;line-height:16px;font-family:'Liberation Sans',sans-serif;font-size:13.6px;color:#fff;left:-189.70px;width:1000px;text-align:right;transform:scaleX(0.9387);transform-origin:right center;">BALANCE</span>
<span class="t" style="top:62.00px;line-height:16px;font-family:'Liberation Sans',sans-serif;font-size:13.6px;color:#fff;left:818.50px;">:</span>
<span class="t" style="top:62.00px;line-height:16px;font-family:'Liberation Sans',sans-serif;font-size:13.6px;color:#fff;left:-87.70px;width:1000px;text-align:right;transform:scaleX(0.9176);transform-origin:right center;">1478.89</span>
<span class="t" style="top:82.00px;line-height:16px;font-family:'Liberation Sans',sans-serif;font-size:13.6px;color:#fff;left:-189.70px;width:1000px;text-align:right;transform:scaleX(0.9387);transform-origin:right center;">EQUITY</span>
<span class="t" style="top:82.00px;line-height:16px;font-family:'Liberation Sans',sans-serif;font-size:13.6px;color:#fff;left:818.50px;">:</span>
<span class="t" style="top:82.00px;line-height:16px;font-family:'Liberation Sans',sans-serif;font-size:13.6px;color:#fff;left:-87.70px;width:1000px;text-align:right;transform:scaleX(0.9176);transform-origin:right center;">1478.89</span>
<span class="t" style="top:102.00px;line-height:16px;font-family:'Liberation Sans',sans-serif;font-size:13.6px;color:#fff;left:-189.70px;width:1000px;text-align:right;transform:scaleX(0.9387);transform-origin:right center;">OPEN ORDERS</span>
<span class="t" style="top:102.00px;line-height:16px;font-family:'Liberation Sans',sans-serif;font-size:13.6px;color:#fff;left:818.50px;">:</span>
<span class="t" style="top:102.00px;line-height:16px;font-family:'Liberation Sans',sans-serif;font-size:13.6px;color:#fff;left:-87.70px;width:1000px;text-align:right;">0</span>
<span class="t" style="top:122.00px;line-height:16px;font-family:'Liberation Sans',sans-serif;font-size:13.6px;color:#fff;left:-189.70px;width:1000px;text-align:right;transform:scaleX(0.9387);transform-origin:right center;">DRAWDOWN</span>
<span class="t" style="top:122.00px;line-height:16px;font-family:'Liberation Sans',sans-serif;font-size:13.6px;color:#fff;left:818.50px;">:</span>
<span class="t" style="top:122.00px;line-height:16px;font-family:'Liberation Sans',sans-serif;font-size:13.6px;color:#fff;left:-87.70px;width:1000px;text-align:right;transform:scaleX(0.9176);transform-origin:right center;">0.00%</span>
<span class="t" style="top:142.00px;line-height:16px;font-family:'Liberation Sans',sans-serif;font-size:13.6px;color:#fff;left:-189.70px;width:1000px;text-align:right;transform:scaleX(0.9387);transform-origin:right center;">FLOATING P/L (GBPJPY)</span>
<span class="t" style="top:142.00px;line-height:16px;font-family:'Liberation Sans',sans-serif;font-size:13.6px;color:#fff;left:818.50px;">:</span>
<span class="t" style="top:142.00px;line-height:16px;font-family:'Liberation Sans',sans-serif;font-size:13.6px;color:#fff;left:-87.70px;width:1000px;text-align:right;transform:scaleX(0.9176);transform-origin:right center;">0.00</span>
<span class="t" style="top:162.00px;line-height:16px;font-family:'Liberation Sans',sans-serif;font-size:13.6px;color:#fff;left:-189.70px;width:1000px;text-align:right;transform:scaleX(0.9387);transform-origin:right center;">PROFIT/LOSS (GBPJPY)</span>
<span class="t" style="top:162.00px;line-height:16px;font-family:'Liberation Sans',sans-serif;font-size:13.6px;color:#fff;left:818.50px;">:</span>
<span class="t" style="top:162.00px;line-height:16px;font-family:'Liberation Sans',sans-serif;font-size:13.6px;color:#fff;left:-87.70px;width:1000px;text-align:right;transform:scaleX(0.9176);transform-origin:right center;">150.36</span>
<span class="t" style="top:181.00px;line-height:16px;font-family:'Liberation Sans',sans-serif;font-size:13.6px;color:#fff;left:-189.70px;width:1000px;text-align:right;transform:scaleX(0.9387);transform-origin:right center;">PROFIT/LOSS TODAY</span>
<span class="t" style="top:181.00px;line-height:16px;font-family:'Liberation Sans',sans-serif;font-size:13.6px;color:#fff;left:818.50px;">:</span>
<span class="t" style="top:181.00px;line-height:16px;font-family:'Liberation Sans',sans-serif;font-size:13.6px;color:#fff;left:-87.70px;width:1000px;text-align:right;transform:scaleX(0.9176);transform-origin:right center;">306.16</span>
</div>
<span class="t" style="top:189.80px;line-height:12px;font-family:'DejaVu Sans Condensed','DejaVu Sans',sans-serif;font-size:9.2px;color:#fff;letter-spacing:0.035px;left:11.00px;">8 Sep 2021</span>
<span class="t" style="top:189.80px;line-height:12px;font-family:'DejaVu Sans Condensed','DejaVu Sans',sans-serif;font-size:9.2px;color:#fff;letter-spacing:-0.022px;left:75.00px;">10 Sep 00:00</span>
<span class="t" style="top:189.80px;line-height:12px;font-family:'DejaVu Sans Condensed','DejaVu Sans',sans-serif;font-size:9.2px;color:#fff;letter-spacing:-0.022px;left:139.00px;">13 Sep 08:00</span>
<span class="t" style="top:189.80px;line-height:12px;font-family:'DejaVu Sans Condensed','DejaVu Sans',sans-serif;font-size:9.2px;color:#fff;letter-spacing:-0.022px;left:203.00px;">14 Sep 16:00</span>
<span class="t" style="top:189.80px;line-height:12px;font-family:'DejaVu Sans Condensed','DejaVu Sans',sans-serif;font-size:9.2px;color:#fff;letter-spacing:-0.022px;left:267.00px;">16 Sep 00:00</span>
<span class="t" style="top:189.80px;line-height:12px;font-family:'DejaVu Sans Condensed','DejaVu Sans',sans-serif;font-size:9.2px;color:#fff;letter-spacing:-0.022px;left:331.00px;">17 Sep 08:00</span>
<span class="t" style="top:189.80px;line-height:12px;font-family:'DejaVu Sans Condensed','DejaVu Sans',sans-serif;font-size:9.2px;color:#fff;letter-spacing:-0.022px;left:395.00px;">20 Sep 16:00</span>
<span class="t" style="top:189.80px;line-height:12px;font-family:'DejaVu Sans Condensed','DejaVu Sans',sans-serif;font-size:9.2px;color:#fff;letter-spacing:-0.022px;left:459.00px;">22 Sep 00:00</span>
<span class="t" style="top:189.80px;line-height:12px;font-family:'DejaVu Sans Condensed','DejaVu Sans',sans-serif;font-size:9.2px;color:#fff;letter-spacing:-0.022px;left:523.00px;">23 Sep 08:00</span>
<span class="t" style="top:189.80px;line-height:12px;font-family:'DejaVu Sans Condensed','DejaVu Sans',sans-serif;font-size:9.2px;color:#fff;letter-spacing:-0.022px;left:587.00px;">24 Sep 16:00</span>
<span class="t" style="top:189.80px;line-height:12px;font-family:'DejaVu Sans Condensed','DejaVu Sans',sans-serif;font-size:9.2px;color:#fff;letter-spacing:-0.022px;left:651.00px;">28 Sep 00:00</span>
<span class="t" style="top:189.80px;line-height:12px;font-family:'DejaVu Sans Condensed','DejaVu Sans',sans-serif;font-size:9.2px;color:#fff;letter-spacing:-0.022px;left:715.00px;">29 Sep 08:00</span>
<span class="t" style="top:189.80px;line-height:12px;font-family:'DejaVu Sans Condensed','DejaVu Sans',sans-serif;font-size:9.2px;color:#fff;letter-spacing:-0.022px;left:779.00px;">30 Sep 16:00</span>
<span class="t" style="top:189.80px;line-height:12px;font-family:'DejaVu Sans Condensed','DejaVu Sans',sans-serif;font-size:9.2px;color:#fff;letter-spacing:0.082px;left:843.00px;">4 Oct 00:00</span>
<span class="t" style="top:189.80px;line-height:12px;font-family:'DejaVu Sans Condensed','DejaVu Sans',sans-serif;font-size:9.2px;color:#fff;letter-spacing:0.082px;left:907.00px;">5 Oct 08:00</span>
<span class="t" style="top:45.60px;line-height:12px;font-family:'DejaVu Sans Condensed','DejaVu Sans',sans-serif;font-size:9.2px;color:#fff;letter-spacing:-0.203px;left:929.00px;">152.650</span>
<span class="t" style="top:78.60px;line-height:12px;font-family:'DejaVu Sans Condensed','DejaVu Sans',sans-serif;font-size:9.2px;color:#fff;letter-spacing:-0.203px;left:929.00px;">151.700</span>
<span class="t" style="top:111.60px;line-height:12px;font-family:'DejaVu Sans Condensed','DejaVu Sans',sans-serif;font-size:9.2px;color:#fff;letter-spacing:-0.203px;left:929.00px;">150.775</span>
<span class="t" style="top:144.60px;line-height:12px;font-family:'DejaVu Sans Condensed','DejaVu Sans',sans-serif;font-size:9.2px;color:#fff;letter-spacing:-0.203px;left:929.00px;">149.850</span>
<span class="t" style="top:177.60px;line-height:12px;font-family:'DejaVu Sans Condensed','DejaVu Sans',sans-serif;font-size:9.2px;color:#fff;letter-spacing:-0.203px;left:929.00px;">148.925</span>
<span class="t" style="top:87.60px;line-height:12px;font-family:'DejaVu Sans Condensed','DejaVu Sans',sans-serif;font-size:9.2px;color:#000;letter-spacing:-0.203px;left:929.00px;">151.446</span>
</div></div>
<div class="tabbar"></div>
<div class="tab1"></div>
<span class="t" style="top:437.30px;line-height:16px;font-family:'Liberation Sans',sans-serif;font-size:12.4px;color:#000;left:14.00px;transform:scaleX(0.8513);transform-origin:left center;">EURUSD,H1</span>
<span class="t" style="top:437.30px;line-height:16px;font-family:'Liberation Sans',sans-serif;font-size:12.4px;color:#7d7d7d;left:97.80px;transform:scaleX(0.8652);transform-origin:left center;">GBPUSD,H1</span>
<span class="t" style="top:437.30px;line-height:16px;font-family:'Liberation Sans',sans-serif;font-size:12.4px;color:#7d7d7d;left:181.50px;transform:scaleX(0.8556);transform-origin:left center;">EURJPY,H1</span>
<span class="t" style="top:437.30px;line-height:16px;font-family:'Liberation Sans',sans-serif;font-size:12.4px;color:#7d7d7d;left:261.50px;transform:scaleX(0.8675);transform-origin:left center;">GBPJPY,H1</span>
<div class="a" style="left:171px;top:440px;width:1px;height:12px;background:#7a7a7a"></div>
<div class="a" style="left:251px;top:440px;width:1px;height:12px;background:#7a7a7a"></div>
<div class="a" style="left:330.5px;top:440px;width:1px;height:12px;background:#7a7a7a"></div>
<svg class="a" style="left:1926px;top:440px" width="30" height="10" viewBox="1926 440 30 10"><path d="M1932.6 441.6v6.6l-3.6-3.3z M1947.4 441.6v6.6l3.6-3.3z" fill="#a3a3a3"/></svg>
<div class="gutter"></div>
<svg class="a" style="left:0;top:460px" width="12" height="12" viewBox="0 460 12 12"><path d="M1.3 463.2l5 4.8M6.3 463.2l-5 4.8" stroke="#000" stroke-width="1.8" fill="none"/></svg>
<svg width="0" height="0" style="position:absolute"><defs><linearGradient id="gp" x1="0" y1="0" x2="0" y2="1"><stop offset="0" stop-color="#fff"/><stop offset=".6" stop-color="#fcfcfc"/><stop offset="1" stop-color="#dcdcdc"/></linearGradient><radialGradient id="gb" cx=".35" cy=".3" r=".8"><stop offset="0" stop-color="#86d4ff"/><stop offset=".5" stop-color="#2a9cf0"/><stop offset="1" stop-color="#0a6ad0"/></radialGradient><radialGradient id="gs" cx=".35" cy=".3" r=".8"><stop offset="0" stop-color="#ffb080"/><stop offset=".5" stop-color="#ff5a1a"/><stop offset="1" stop-color="#d03000"/></radialGradient></defs></svg>
<div class="table">
<div class="a" style="left:13px;top:461px;width:1944px;height:24px;background:#fff"></div>
<div class="a" style="left:13px;top:485px;width:1944px;height:1px;background:#d5d5d5"></div>
<div class="a" style="left:155px;top:461px;width:1px;height:24px;background:#e2e2e2"></div>
<div class="a" style="left:398px;top:461px;width:1px;height:24px;background:#e2e2e2"></div>
<div class="a" style="left:508px;top:461px;width:1px;height:24px;background:#e2e2e2"></div>
<div class="a" style="left:596px;top:461px;width:1px;height:24px;background:#e2e2e2"></div>
<div class="a" style="left:706px;top:461px;width:1px;height:24px;background:#e2e2e2"></div>
<div class="a" style="left:816px;top:461px;width:1px;height:24px;background:#e2e2e2"></div>
<div class="a" style="left:926px;top:461px;width:1px;height:24px;background:#e2e2e2"></div>
<div class="a" style="left:1036px;top:461px;width:1px;height:24px;background:#e2e2e2"></div>
<div class="a" style="left:1279px;top:461px;width:1px;height:24px;background:#e2e2e2"></div>
<div class="a" style="left:1389px;top:461px;width:1px;height:24px;background:#e2e2e2"></div>
<div class="a" style="left:1499px;top:461px;width:1px;height:24px;background:#e2e2e2"></div>
<div class="a" style="left:1620px;top:461px;width:1px;height:24px;background:#e2e2e2"></div>
<span class="t" style="top:465.20px;line-height:16px;font-family:'Liberation Sans',sans-serif;font-size:11.4px;color:#000;letter-spacing:0.405px;left:20.00px;">Ordernummer</span>
<svg class="a" style="left:105px;top:468px" width="8" height="10" viewBox="0 0 8 10"><path d="M2 8.5l3.4-6.5" stroke="#8a8a8a" fill="none"/></svg>
<span class="t" style="top:465.20px;line-height:16px;font-family:'Liberation Sans',sans-serif;font-size:11.4px;color:#000;letter-spacing:0.699px;left:-607.10px;width:1000px;text-align:right;">Zeit</span>
<span class="t" style="top:465.20px;line-height:16px;font-family:'Liberation Sans',sans-serif;font-size:11.4px;color:#000;letter-spacing:-0.687px;left:-498.49px;width:1000px;text-align:right;">Typ</span>
<span class="t" style="top:465.20px;line-height:16px;font-family:'Liberation Sans',sans-serif;font-size:11.4px;color:#000;letter-spacing:0.389px;left:-409.41px;width:1000px;text-align:right;">Volumen</span>
<span class="t" style="top:465.20px;line-height:16px;font-family:'Liberation Sans',sans-serif;font-size:11.4px;color:#000;letter-spacing:0.317px;left:-299.48px;width:1000px;text-align:right;">Symbol</span>
<span class="t" style="top:465.20px;line-height:16px;font-family:'Liberation Sans',sans-serif;font-size:11.4px;color:#000;letter-spacing:-0.468px;left:-190.27px;width:1000px;text-align:right;">Preis</span>
<span class="t" style="top:465.20px;line-height:16px;font-family:'Liberation Sans',sans-serif;font-size:11.4px;color:#000;letter-spacing:-0.311px;left:-80.11px;width:1000px;text-align:right;">S / L</span>
<span class="t" style="top:465.20px;line-height:16px;font-family:'Liberation Sans',sans-serif;font-size:11.4px;color:#000;letter-spacing:0.033px;left:30.23px;width:1000px;text-align:right;">T/P</span>
<span class="t" style="top:465.20px;line-height:16px;font-family:'Liberation Sans',sans-serif;font-size:11.4px;color:#000;letter-spacing:0.699px;left:273.90px;width:1000px;text-align:right;">Zeit</span>
<span class="t" style="top:465.20px;line-height:16px;font-family:'Liberation Sans',sans-serif;font-size:11.4px;color:#000;letter-spacing:-0.468px;left:382.73px;width:1000px;text-align:right;">Preis</span>
<span class="t" style="top:465.20px;line-height:16px;font-family:'Liberation Sans',sans-serif;font-size:11.4px;color:#000;letter-spacing:-0.506px;left:492.69px;width:1000px;text-align:right;">Swap</span>
<span class="t" style="top:465.20px;line-height:16px;font-family:'Liberation Sans',sans-serif;font-size:11.4px;color:#000;letter-spacing:0.049px;left:614.25px;width:1000px;text-align:right;">Gewinn</span>
<span class="t" style="top:465.20px;line-height:16px;font-family:'Liberation Sans',sans-serif;font-size:11.4px;color:#000;letter-spacing:0.447px;left:951.65px;width:1000px;text-align:right;">Kommentar</span>
<div class="a" style="left:13px;top:486px;width:1944px;height:19px;background:#fff"></div>
<div class="a" style="left:13px;top:505px;width:1944px;height:1px;background:#d2d2d2"></div>
<div class="a" style="left:154px;top:486px;width:1px;height:19px;background:#d8d8d8"></div>
<div class="a" style="left:397px;top:486px;width:1px;height:19px;background:#d8d8d8"></div>
<div class="a" style="left:507px;top:486px;width:1px;height:19px;background:#d8d8d8"></div>
<div class="a" style="left:595px;top:486px;width:1px;height:19px;background:#d8d8d8"></div>
<div class="a" style="left:705px;top:486px;width:1px;height:19px;background:#d8d8d8"></div>
<div class="a" style="left:815px;top:486px;width:1px;height:19px;background:#d8d8d8"></div>
<div class="a" style="left:925px;top:486px;width:1px;height:19px;background:#d8d8d8"></div>
<div class="a" style="left:1035px;top:486px;width:1px;height:19px;background:#d8d8d8"></div>
<div class="a" style="left:1278px;top:486px;width:1px;height:19px;background:#d8d8d8"></div>
<div class="a" style="left:1388px;top:486px;width:1px;height:19px;background:#d8d8d8"></div>
<div class="a" style="left:1498px;top:486px;width:1px;height:19px;background:#d8d8d8"></div>
<div class="a" style="left:1619px;top:486px;width:1px;height:19px;background:#d8d8d8"></div>
<svg class="a" style="left:15px;top:487px" width="16" height="16" viewBox="0 0 16 16"><path d="M1.5 1.5h7l3 3v9.5h-10z" fill="url(#gp)" stroke="#7c7c7c" stroke-width="1"/><path d="M8.5 1.5v3h3" fill="#f4f4f4" stroke="#7c7c7c"/><circle cx="11.5" cy="11.7" r="3.4" fill="url(#gb)" stroke="#0a60c0" stroke-width=".7"/></svg>
<span class="t" style="top:487.40px;line-height:16px;font-family:'Liberation Sans',sans-serif;font-size:11.4px;color:#000;letter-spacing:-0.358px;left:34.80px;">434783874</span>
<span class="t" style="top:487.40px;line-height:16px;font-family:'Liberation Sans',sans-serif;font-size:11.4px;color:#000;letter-spacing:-0.279px;left:-604.88px;width:1000px;text-align:right;">2021.10.05 09:46:08</span>
<span class="t" style="top:487.40px;line-height:16px;font-family:'Liberation Sans',sans-serif;font-size:11.4px;color:#000;letter-spacing:0.610px;left:-493.99px;width:1000px;text-align:right;">buy</span>
<span class="t" style="top:487.40px;line-height:16px;font-family:'Liberation Sans',sans-serif;font-size:11.4px;color:#000;letter-spacing:-0.355px;left:-406.96px;width:1000px;text-align:right;">1.00</span>
<span class="t" style="top:487.40px;line-height:16px;font-family:'Liberation Sans',sans-serif;font-size:11.4px;color:#000;letter-spacing:0.541px;left:-296.06px;width:1000px;text-align:right;">gbpjpy</span>
<span class="t" style="top:487.40px;line-height:16px;font-family:'Liberation Sans',sans-serif;font-size:11.4px;color:#000;letter-spacing:-0.330px;left:-186.93px;width:1000px;text-align:right;">151.243</span>
<span class="t" style="top:487.40px;line-height:16px;font-family:'Liberation Sans',sans-serif;font-size:11.4px;color:#000;letter-spacing:-0.342px;left:-76.94px;width:1000px;text-align:right;">0.000</span>
<span class="t" style="top:487.40px;line-height:16px;font-family:'Liberation Sans',sans-serif;font-size:11.4px;color:#000;letter-spacing:-0.342px;left:33.06px;width:1000px;text-align:right;">0.000</span>
<span class="t" style="top:487.40px;line-height:16px;font-family:'Liberation Sans',sans-serif;font-size:11.4px;color:#000;letter-spacing:-0.279px;left:276.12px;width:1000px;text-align:right;">2021.10.05 09:51:58</span>
<span class="t" style="top:487.40px;line-height:16px;font-family:'Liberation Sans',sans-serif;font-size:11.4px;color:#000;letter-spacing:-0.330px;left:386.07px;width:1000px;text-align:right;">151.301</span>
<span class="t" style="top:487.40px;line-height:16px;font-family:'Liberation Sans',sans-serif;font-size:11.4px;color:#000;letter-spacing:-0.355px;left:496.04px;width:1000px;text-align:right;">0.00</span>
<span class="t" style="top:487.40px;line-height:16px;font-family:'Liberation Sans',sans-serif;font-size:11.4px;color:#000;letter-spacing:-0.342px;left:617.06px;width:1000px;text-align:right;">52.16</span>
<span class="t" style="top:487.40px;line-height:16px;font-family:'Liberation Sans',sans-serif;font-size:11.4px;color:#000;letter-spacing:-0.079px;left:952.32px;width:1000px;text-align:right;">MasterScalper PRO Buy</span>
<div class="a" style="left:13px;top:506px;width:1944px;height:19px;background:#ececec"></div>
<div class="a" style="left:13px;top:525px;width:1944px;height:1px;background:#d2d2d2"></div>
<div class="a" style="left:154px;top:506px;width:1px;height:19px;background:#d8d8d8"></div>
<div class="a" style="left:397px;top:506px;width:1px;height:19px;background:#d8d8d8"></div>
<div class="a" style="left:507px;top:506px;width:1px;height:19px;background:#d8d8d8"></div>
<div class="a" style="left:595px;top:506px;width:1px;height:19px;background:#d8d8d8"></div>
<div class="a" style="left:705px;top:506px;width:1px;height:19px;background:#d8d8d8"></div>
<div class="a" style="left:815px;top:506px;width:1px;height:19px;background:#d8d8d8"></div>
<div class="a" style="left:925px;top:506px;width:1px;height:19px;background:#d8d8d8"></div>
<div class="a" style="left:1035px;top:506px;width:1px;height:19px;background:#d8d8d8"></div>
<div class="a" style="left:1278px;top:506px;width:1px;height:19px;background:#d8d8d8"></div>
<div class="a" style="left:1388px;top:506px;width:1px;height:19px;background:#d8d8d8"></div>
<div class="a" style="left:1498px;top:506px;width:1px;height:19px;background:#d8d8d8"></div>
<div class="a" style="left:1619px;top:506px;width:1px;height:19px;background:#d8d8d8"></div>
<div class="a" style="left:927px;top:507px;width:107px;height:18px;background:#60ee60"></div>
<svg class="a" style="left:15px;top:507px" width="16" height="16" viewBox="0 0 16 16"><path d="M1.5 1.5h7l3 3v9.5h-10z" fill="url(#gp)" stroke="#7c7c7c" stroke-width="1"/><path d="M8.5 1.5v3h3" fill="#f4f4f4" stroke="#7c7c7c"/><circle cx="11.5" cy="11.7" r="3.4" fill="url(#gb)" stroke="#0a60c0" stroke-width=".7"/></svg>
<span class="t" style="top:507.40px;line-height:16px;font-family:'Liberation Sans',sans-serif;font-size:11.4px;color:#000;letter-spacing:-0.358px;left:34.80px;">434807155</span>
<span class="t" style="top:507.40px;line-height:16px;font-family:'Liberation Sans',sans-serif;font-size:11.4px;color:#000;letter-spacing:-0.279px;left:-604.88px;width:1000px;text-align:right;">2021.10.05 10:17:18</span>
<span class="t" style="top:507.40px;line-height:16px;font-family:'Liberation Sans',sans-serif;font-size:11.4px;color:#000;letter-spacing:0.610px;left:-493.99px;width:1000px;text-align:right;">buy</span>
<span class="t" style="top:507.40px;line-height:16px;font-family:'Liberation Sans',sans-serif;font-size:11.4px;color:#000;letter-spacing:-0.355px;left:-406.96px;width:1000px;text-align:right;">1.00</span>
<span class="t" style="top:507.40px;line-height:16px;font-family:'Liberation Sans',sans-serif;font-size:11.4px;color:#000;letter-spacing:0.541px;left:-296.06px;width:1000px;text-align:right;">gbpjpy</span>
<span class="t" style="top:507.40px;line-height:16px;font-family:'Liberation Sans',sans-serif;font-size:11.4px;color:#000;letter-spacing:-0.330px;left:-186.93px;width:1000px;text-align:right;">151.406</span>
<span class="t" style="top:507.40px;line-height:16px;font-family:'Liberation Sans',sans-serif;font-size:11.4px;color:#000;letter-spacing:-0.342px;left:-76.94px;width:1000px;text-align:right;">0.000</span>
<span class="t" style="top:507.40px;line-height:16px;font-family:'Liberation Sans',sans-serif;font-size:11.4px;color:#000;letter-spacing:-0.330px;left:33.07px;width:1000px;text-align:right;">151.378</span>
<span class="t" style="top:507.40px;line-height:16px;font-family:'Liberation Sans',sans-serif;font-size:11.4px;color:#000;letter-spacing:-0.277px;left:276.12px;width:1000px;text-align:right;">2021.10.05 11:08:29</span>
<span class="t" style="top:507.40px;line-height:16px;font-family:'Liberation Sans',sans-serif;font-size:11.4px;color:#000;letter-spacing:-0.330px;left:386.07px;width:1000px;text-align:right;">151.379</span>
<span class="t" style="top:507.40px;line-height:16px;font-family:'Liberation Sans',sans-serif;font-size:11.4px;color:#000;letter-spacing:-0.355px;left:496.04px;width:1000px;text-align:right;">0.00</span>
<span class="t" style="top:507.40px;line-height:16px;font-family:'Liberation Sans',sans-serif;font-size:11.4px;color:#000;letter-spacing:-0.310px;left:617.09px;width:1000px;text-align:right;">-24.31</span>
<span class="t" style="top:507.40px;line-height:16px;font-family:'Liberation Sans',sans-serif;font-size:11.4px;color:#000;letter-spacing:0.062px;left:952.46px;width:1000px;text-align:right;">MasterScalper PRO Buy[tp]</span>
<div class="a" style="left:13px;top:526px;width:1944px;height:19px;background:#fff"></div>
<div class="a" style="left:13px;top:545px;width:1944px;height:1px;background:#d2d2d2"></div>
<div class="a" style="left:154px;top:526px;width:1px;height:19px;background:#d8d8d8"></div>
<div class="a" style="left:397px;top:526px;width:1px;height:19px;background:#d8d8d8"></div>
<div class="a" style="left:507px;top:526px;width:1px;height:19px;background:#d8d8d8"></div>
<div class="a" style="left:595px;top:526px;width:1px;height:19px;background:#d8d8d8"></div>
<div class="a" style="left:705px;top:526px;width:1px;height:19px;background:#d8d8d8"></div>
<div class="a" style="left:815px;top:526px;width:1px;height:19px;background:#d8d8d8"></div>
<div class="a" style="left:925px;top:526px;width:1px;height:19px;background:#d8d8d8"></div>
<div class="a" style="left:1035px;top:526px;width:1px;height:19px;background:#d8d8d8"></div>
<div class="a" style="left:1278px;top:526px;width:1px;height:19px;background:#d8d8d8"></div>
<div class="a" style="left:1388px;top:526px;width:1px;height:19px;background:#d8d8d8"></div>
<div class="a" style="left:1498px;top:526px;width:1px;height:19px;background:#d8d8d8"></div>
<div class="a" style="left:1619px;top:526px;width:1px;height:19px;background:#d8d8d8"></div>
<div class="a" style="left:927px;top:527px;width:107px;height:18px;background:#60ee60"></div>
<svg class="a" style="left:15px;top:527px" width="16" height="16" viewBox="0 0 16 16"><path d="M1.5 1.5h7l3 3v9.5h-10z" fill="url(#gp)" stroke="#7c7c7c" stroke-width="1"/><path d="M8.5 1.5v3h3" fill="#f4f4f4" stroke="#7c7c7c"/><circle cx="11.5" cy="11.7" r="3.4" fill="url(#gb)" stroke="#0a60c0" stroke-width=".7"/></svg>
<span class="t" style="top:527.40px;line-height:16px;font-family:'Liberation Sans',sans-serif;font-size:11.4px;color:#000;letter-spacing:-0.358px;left:34.80px;">434807784</span>
<span class="t" style="top:527.40px;line-height:16px;font-family:'Liberation Sans',sans-serif;font-size:11.4px;color:#000;letter-spacing:-0.279px;left:-604.88px;width:1000px;text-align:right;">2021.10.05 10:18:15</span>
<span class="t" style="top:527.40px;line-height:16px;font-family:'Liberation Sans',sans-serif;font-size:11.4px;color:#000;letter-spacing:0.610px;left:-493.99px;width:1000px;text-align:right;">buy</span>
<span class="t" style="top:527.40px;line-height:16px;font-family:'Liberation Sans',sans-serif;font-size:11.4px;color:#000;letter-spacing:-0.355px;left:-406.96px;width:1000px;text-align:right;">1.30</span>
<span class="t" style="top:527.40px;line-height:16px;font-family:'Liberation Sans',sans-serif;font-size:11.4px;color:#000;letter-spacing:0.541px;left:-296.06px;width:1000px;text-align:right;">gbpjpy</span>
<span class="t" style="top:527.40px;line-height:16px;font-family:'Liberation Sans',sans-serif;font-size:11.4px;color:#000;letter-spacing:-0.330px;left:-186.93px;width:1000px;text-align:right;">151.355</span>
<span class="t" style="top:527.40px;line-height:16px;font-family:'Liberation Sans',sans-serif;font-size:11.4px;color:#000;letter-spacing:-0.342px;left:-76.94px;width:1000px;text-align:right;">0.000</span>
<span class="t" style="top:527.40px;line-height:16px;font-family:'Liberation Sans',sans-serif;font-size:11.4px;color:#000;letter-spacing:-0.330px;left:33.07px;width:1000px;text-align:right;">151.378</span>
<span class="t" style="top:527.40px;line-height:16px;font-family:'Liberation Sans',sans-serif;font-size:11.4px;color:#000;letter-spacing:-0.277px;left:276.12px;width:1000px;text-align:right;">2021.10.05 11:08:29</span>
<span class="t" style="top:527.40px;line-height:16px;font-family:'Liberation Sans',sans-serif;font-size:11.4px;color:#000;letter-spacing:-0.330px;left:386.07px;width:1000px;text-align:right;">151.379</span>
<span class="t" style="top:527.40px;line-height:16px;font-family:'Liberation Sans',sans-serif;font-size:11.4px;color:#000;letter-spacing:-0.355px;left:496.04px;width:1000px;text-align:right;">0.00</span>
<span class="t" style="top:527.40px;line-height:16px;font-family:'Liberation Sans',sans-serif;font-size:11.4px;color:#000;letter-spacing:-0.342px;left:617.06px;width:1000px;text-align:right;">28.08</span>
<span class="t" style="top:527.40px;line-height:16px;font-family:'Liberation Sans',sans-serif;font-size:11.4px;color:#000;letter-spacing:0.366px;left:952.77px;width:1000px;text-align:right;">Martingale Buy[tp]</span>
<div class="a" style="left:13px;top:546px;width:1944px;height:19px;background:#ececec"></div>
<div class="a" style="left:13px;top:565px;width:1944px;height:1px;background:#d2d2d2"></div>
<div class="a" style="left:154px;top:546px;width:1px;height:19px;background:#d8d8d8"></div>
<div class="a" style="left:397px;top:546px;width:1px;height:19px;background:#d8d8d8"></div>
<div class="a" style="left:507px;top:546px;width:1px;height:19px;background:#d8d8d8"></div>
<div class="a" style="left:595px;top:546px;width:1px;height:19px;background:#d8d8d8"></div>
<div class="a" style="left:705px;top:546px;width:1px;height:19px;background:#d8d8d8"></div>
<div class="a" style="left:815px;top:546px;width:1px;height:19px;background:#d8d8d8"></div>
<div class="a" style="left:925px;top:546px;width:1px;height:19px;background:#d8d8d8"></div>
<div class="a" style="left:1035px;top:546px;width:1px;height:19px;background:#d8d8d8"></div>
<div class="a" style="left:1278px;top:546px;width:1px;height:19px;background:#d8d8d8"></div>
<div class="a" style="left:1388px;top:546px;width:1px;height:19px;background:#d8d8d8"></div>
<div class="a" style="left:1498px;top:546px;width:1px;height:19px;background:#d8d8d8"></div>
<div class="a" style="left:1619px;top:546px;width:1px;height:19px;background:#d8d8d8"></div>
<svg class="a" style="left:15px;top:547px" width="16" height="16" viewBox="0 0 16 16"><path d="M1.5 1.5h7l3 3v9.5h-10z" fill="url(#gp)" stroke="#7c7c7c" stroke-width="1"/><path d="M8.5 1.5v3h3" fill="#f4f4f4" stroke="#7c7c7c"/><circle cx="11.5" cy="11.7" r="3.4" fill="url(#gs)" stroke="#b83000" stroke-width=".7"/></svg>
<span class="t" style="top:547.40px;line-height:16px;font-family:'Liberation Sans',sans-serif;font-size:11.4px;color:#000;letter-spacing:-0.358px;left:34.80px;">434817459</span>
<span class="t" style="top:547.40px;line-height:16px;font-family:'Liberation Sans',sans-serif;font-size:11.4px;color:#000;letter-spacing:-0.279px;left:-604.88px;width:1000px;text-align:right;">2021.10.05 10:31:21</span>
<span class="t" style="top:547.40px;line-height:16px;font-family:'Liberation Sans',sans-serif;font-size:11.4px;color:#000;letter-spacing:-0.135px;left:-494.74px;width:1000px;text-align:right;">sell</span>
<span class="t" style="top:547.40px;line-height:16px;font-family:'Liberation Sans',sans-serif;font-size:11.4px;color:#000;letter-spacing:-0.355px;left:-406.96px;width:1000px;text-align:right;">1.00</span>
<span class="t" style="top:547.40px;line-height:16px;font-family:'Liberation Sans',sans-serif;font-size:11.4px;color:#000;letter-spacing:0.149px;left:-296.45px;width:1000px;text-align:right;">eurusd</span>
<span class="t" style="top:547.40px;line-height:16px;font-family:'Liberation Sans',sans-serif;font-size:11.4px;color:#000;letter-spacing:-0.330px;left:-186.93px;width:1000px;text-align:right;">1.15988</span>
<span class="t" style="top:547.40px;line-height:16px;font-family:'Liberation Sans',sans-serif;font-size:11.4px;color:#000;letter-spacing:-0.330px;left:-76.93px;width:1000px;text-align:right;">0.00000</span>
<span class="t" style="top:547.40px;line-height:16px;font-family:'Liberation Sans',sans-serif;font-size:11.4px;color:#000;letter-spacing:-0.330px;left:33.07px;width:1000px;text-align:right;">0.00000</span>
<span class="t" style="top:547.40px;line-height:16px;font-family:'Liberation Sans',sans-serif;font-size:11.4px;color:#000;letter-spacing:-0.279px;left:276.12px;width:1000px;text-align:right;">2021.10.05 10:51:03</span>
<span class="t" style="top:547.40px;line-height:16px;font-family:'Liberation Sans',sans-serif;font-size:11.4px;color:#000;letter-spacing:-0.330px;left:386.07px;width:1000px;text-align:right;">1.15938</span>
<span class="t" style="top:547.40px;line-height:16px;font-family:'Liberation Sans',sans-serif;font-size:11.4px;color:#000;letter-spacing:-0.355px;left:496.04px;width:1000px;text-align:right;">0.00</span>
<span class="t" style="top:547.40px;line-height:16px;font-family:'Liberation Sans',sans-serif;font-size:11.4px;color:#000;letter-spacing:-0.342px;left:617.06px;width:1000px;text-align:right;">50.00</span>
<span class="t" style="top:547.40px;line-height:16px;font-family:'Liberation Sans',sans-serif;font-size:11.4px;color:#000;letter-spacing:-0.169px;left:952.23px;width:1000px;text-align:right;">MasterScalper PRO Sell</span>
<div class="a" style="left:13px;top:566px;width:1944px;height:19px;background:#fff"></div>
<div class="a" style="left:13px;top:585px;width:1944px;height:1px;background:#d2d2d2"></div>
<div class="a" style="left:154px;top:566px;width:1px;height:19px;background:#d8d8d8"></div>
<div class="a" style="left:397px;top:566px;width:1px;height:19px;background:#d8d8d8"></div>
<div class="a" style="left:507px;top:566px;width:1px;height:19px;background:#d8d8d8"></div>
<div class="a" style="left:595px;top:566px;width:1px;height:19px;background:#d8d8d8"></div>
<div class="a" style="left:705px;top:566px;width:1px;height:19px;background:#d8d8d8"></div>
<div class="a" style="left:815px;top:566px;width:1px;height:19px;background:#d8d8d8"></div>
<div class="a" style="left:925px;top:566px;width:1px;height:19px;background:#d8d8d8"></div>
<div class="a" style="left:1035px;top:566px;width:1px;height:19px;background:#d8d8d8"></div>
<div class="a" style="left:1278px;top:566px;width:1px;height:19px;background:#d8d8d8"></div>
<div class="a" style="left:1388px;top:566px;width:1px;height:19px;background:#d8d8d8"></div>
<div class="a" style="left:1498px;top:566px;width:1px;height:19px;background:#d8d8d8"></div>
<div class="a" style="left:1619px;top:566px;width:1px;height:19px;background:#d8d8d8"></div>
<div class="a" style="left:927px;top:567px;width:107px;height:18px;background:#60ee60"></div>
<svg class="a" style="left:15px;top:567px" width="16" height="16" viewBox="0 0 16 16"><path d="M1.5 1.5h7l3 3v9.5h-10z" fill="url(#gp)" stroke="#7c7c7c" stroke-width="1"/><path d="M8.5 1.5v3h3" fill="#f4f4f4" stroke="#7c7c7c"/><circle cx="11.5" cy="11.7" r="3.4" fill="url(#gb)" stroke="#0a60c0" stroke-width=".7"/></svg>
<span class="t" style="top:567.40px;line-height:16px;font-family:'Liberation Sans',sans-serif;font-size:11.4px;color:#000;letter-spacing:-0.358px;left:34.80px;">434836026</span>
<span class="t" style="top:567.40px;line-height:16px;font-family:'Liberation Sans',sans-serif;font-size:11.4px;color:#000;letter-spacing:-0.277px;left:-604.88px;width:1000px;text-align:right;">2021.10.05 11:01:45</span>
<span class="t" style="top:567.40px;line-height:16px;font-family:'Liberation Sans',sans-serif;font-size:11.4px;color:#000;letter-spacing:0.610px;left:-493.99px;width:1000px;text-align:right;">buy</span>
<span class="t" style="top:567.40px;line-height:16px;font-family:'Liberation Sans',sans-serif;font-size:11.4px;color:#000;letter-spacing:-0.355px;left:-406.96px;width:1000px;text-align:right;">1.69</span>
<span class="t" style="top:567.40px;line-height:16px;font-family:'Liberation Sans',sans-serif;font-size:11.4px;color:#000;letter-spacing:0.541px;left:-296.06px;width:1000px;text-align:right;">gbpjpy</span>
<span class="t" style="top:567.40px;line-height:16px;font-family:'Liberation Sans',sans-serif;font-size:11.4px;color:#000;letter-spacing:-0.330px;left:-186.93px;width:1000px;text-align:right;">151.308</span>
<span class="t" style="top:567.40px;line-height:16px;font-family:'Liberation Sans',sans-serif;font-size:11.4px;color:#000;letter-spacing:-0.342px;left:-76.94px;width:1000px;text-align:right;">0.000</span>
<span class="t" style="top:567.40px;line-height:16px;font-family:'Liberation Sans',sans-serif;font-size:11.4px;color:#000;letter-spacing:-0.330px;left:33.07px;width:1000px;text-align:right;">151.378</span>
<span class="t" style="top:567.40px;line-height:16px;font-family:'Liberation Sans',sans-serif;font-size:11.4px;color:#000;letter-spacing:-0.277px;left:276.12px;width:1000px;text-align:right;">2021.10.05 11:08:29</span>
<span class="t" style="top:567.40px;line-height:16px;font-family:'Liberation Sans',sans-serif;font-size:11.4px;color:#000;letter-spacing:-0.330px;left:386.07px;width:1000px;text-align:right;">151.379</span>
<span class="t" style="top:567.40px;line-height:16px;font-family:'Liberation Sans',sans-serif;font-size:11.4px;color:#000;letter-spacing:-0.355px;left:496.04px;width:1000px;text-align:right;">0.00</span>
<span class="t" style="top:567.40px;line-height:16px;font-family:'Liberation Sans',sans-serif;font-size:11.4px;color:#000;letter-spacing:-0.335px;left:617.07px;width:1000px;text-align:right;">108.01</span>
<span class="t" style="top:567.40px;line-height:16px;font-family:'Liberation Sans',sans-serif;font-size:11.4px;color:#000;letter-spacing:0.366px;left:952.77px;width:1000px;text-align:right;">Martingale Buy[tp]</span>
<div class="a" style="left:13px;top:586px;width:1944px;height:19px;background:#ececec"></div>
<div class="a" style="left:13px;top:605px;width:1944px;height:1px;background:#d2d2d2"></div>
<div class="a" style="left:154px;top:586px;width:1px;height:19px;background:#d8d8d8"></div>
<div class="a" style="left:397px;top:586px;width:1px;height:19px;background:#d8d8d8"></div>
<div class="a" style="left:507px;top:586px;width:1px;height:19px;background:#d8d8d8"></div>
<div class="a" style="left:595px;top:586px;width:1px;height:19px;background:#d8d8d8"></div>
<div class="a" style="left:705px;top:586px;width:1px;height:19px;background:#d8d8d8"></div>
<div class="a" style="left:815px;top:586px;width:1px;height:19px;background:#d8d8d8"></div>
<div class="a" style="left:925px;top:586px;width:1px;height:19px;background:#d8d8d8"></div>
<div class="a" style="left:1035px;top:586px;width:1px;height:19px;background:#d8d8d8"></div>
<div class="a" style="left:1278px;top:586px;width:1px;height:19px;background:#d8d8d8"></div>
<div class="a" style="left:1388px;top:586px;width:1px;height:19px;background:#d8d8d8"></div>
<div class="a" style="left:1498px;top:586px;width:1px;height:19px;background:#d8d8d8"></div>
<div class="a" style="left:1619px;top:586px;width:1px;height:19px;background:#d8d8d8"></div>
<div class="a" style="left:927px;top:587px;width:107px;height:18px;background:#60ee60"></div>
<svg class="a" style="left:15px;top:587px" width="16" height="16" viewBox="0 0 16 16"><path d="M1.5 1.5h7l3 3v9.5h-10z" fill="url(#gp)" stroke="#7c7c7c" stroke-width="1"/><path d="M8.5 1.5v3h3" fill="#f4f4f4" stroke="#7c7c7c"/><circle cx="11.5" cy="11.7" r="3.4" fill="url(#gb)" stroke="#0a60c0" stroke-width=".7"/></svg>
<span class="t" style="top:587.40px;line-height:16px;font-family:'Liberation Sans',sans-serif;font-size:11.4px;color:#000;letter-spacing:-0.358px;left:34.80px;">434839690</span>
<span class="t" style="top:587.40px;line-height:16px;font-family:'Liberation Sans',sans-serif;font-size:11.4px;color:#000;letter-spacing:-0.277px;left:-604.88px;width:1000px;text-align:right;">2021.10.05 11:08:29</span>
<span class="t" style="top:587.40px;line-height:16px;font-family:'Liberation Sans',sans-serif;font-size:11.4px;color:#000;letter-spacing:0.610px;left:-493.99px;width:1000px;text-align:right;">buy</span>
<span class="t" style="top:587.40px;line-height:16px;font-family:'Liberation Sans',sans-serif;font-size:11.4px;color:#000;letter-spacing:-0.355px;left:-406.96px;width:1000px;text-align:right;">1.00</span>
<span class="t" style="top:587.40px;line-height:16px;font-family:'Liberation Sans',sans-serif;font-size:11.4px;color:#000;letter-spacing:0.380px;left:-296.22px;width:1000px;text-align:right;">gbpusd</span>
<span class="t" style="top:587.40px;line-height:16px;font-family:'Liberation Sans',sans-serif;font-size:11.4px;color:#000;letter-spacing:-0.330px;left:-186.93px;width:1000px;text-align:right;">1.36273</span>
<span class="t" style="top:587.40px;line-height:16px;font-family:'Liberation Sans',sans-serif;font-size:11.4px;color:#000;letter-spacing:-0.330px;left:-76.93px;width:1000px;text-align:right;">0.00000</span>
<span class="t" style="top:587.40px;line-height:16px;font-family:'Liberation Sans',sans-serif;font-size:11.4px;color:#000;letter-spacing:-0.330px;left:33.07px;width:1000px;text-align:right;">1.36246</span>
<span class="t" style="top:587.40px;line-height:16px;font-family:'Liberation Sans',sans-serif;font-size:11.4px;color:#000;letter-spacing:-0.277px;left:276.12px;width:1000px;text-align:right;">2021.10.05 11:35:52</span>
<span class="t" style="top:587.40px;line-height:16px;font-family:'Liberation Sans',sans-serif;font-size:11.4px;color:#000;letter-spacing:-0.330px;left:386.07px;width:1000px;text-align:right;">1.36246</span>
<span class="t" style="top:587.40px;line-height:16px;font-family:'Liberation Sans',sans-serif;font-size:11.4px;color:#000;letter-spacing:-0.355px;left:496.04px;width:1000px;text-align:right;">0.00</span>
<span class="t" style="top:587.40px;line-height:16px;font-family:'Liberation Sans',sans-serif;font-size:11.4px;color:#000;letter-spacing:-0.310px;left:617.09px;width:1000px;text-align:right;">-27.00</span>
<span class="t" style="top:587.40px;line-height:16px;font-family:'Liberation Sans',sans-serif;font-size:11.4px;color:#000;letter-spacing:0.062px;left:952.46px;width:1000px;text-align:right;">MasterScalper PRO Buy[tp]</span>
<div class="a" style="left:13px;top:606px;width:1944px;height:19px;background:#fff"></div>
<div class="a" style="left:13px;top:625px;width:1944px;height:1px;background:#d2d2d2"></div>
<div class="a" style="left:154px;top:606px;width:1px;height:19px;background:#d8d8d8"></div>
<div class="a" style="left:397px;top:606px;width:1px;height:19px;background:#d8d8d8"></div>
<div class="a" style="left:507px;top:606px;width:1px;height:19px;background:#d8d8d8"></div>
<div class="a" style="left:595px;top:606px;width:1px;height:19px;background:#d8d8d8"></div>
<div class="a" style="left:705px;top:606px;width:1px;height:19px;background:#d8d8d8"></div>
<div class="a" style="left:815px;top:606px;width:1px;height:19px;background:#d8d8d8"></div>
<div class="a" style="left:925px;top:606px;width:1px;height:19px;background:#d8d8d8"></div>
<div class="a" style="left:1035px;top:606px;width:1px;height:19px;background:#d8d8d8"></div>
<div class="a" style="left:1278px;top:606px;width:1px;height:19px;background:#d8d8d8"></div>
<div class="a" style="left:1388px;top:606px;width:1px;height:19px;background:#d8d8d8"></div>
<div class="a" style="left:1498px;top:606px;width:1px;height:19px;background:#d8d8d8"></div>
<div class="a" style="left:1619px;top:606px;width:1px;height:19px;background:#d8d8d8"></div>
<div class="a" style="left:927px;top:607px;width:107px;height:18px;background:#60ee60"></div>
<svg class="a" style="left:15px;top:607px" width="16" height="16" viewBox="0 0 16 16"><path d="M1.5 1.5h7l3 3v9.5h-10z" fill="url(#gp)" stroke="#7c7c7c" stroke-width="1"/><path d="M8.5 1.5v3h3" fill="#f4f4f4" stroke="#7c7c7c"/><circle cx="11.5" cy="11.7" r="3.4" fill="url(#gb)" stroke="#0a60c0" stroke-width=".7"/></svg>
<span class="t" style="top:607.40px;line-height:16px;font-family:'Liberation Sans',sans-serif;font-size:11.4px;color:#000;letter-spacing:-0.358px;left:34.80px;">434840889</span>
<span class="t" style="top:607.40px;line-height:16px;font-family:'Liberation Sans',sans-serif;font-size:11.4px;color:#000;letter-spacing:-0.277px;left:-604.88px;width:1000px;text-align:right;">2021.10.05 11:10:17</span>
<span class="t" style="top:607.40px;line-height:16px;font-family:'Liberation Sans',sans-serif;font-size:11.4px;color:#000;letter-spacing:0.610px;left:-493.99px;width:1000px;text-align:right;">buy</span>
<span class="t" style="top:607.40px;line-height:16px;font-family:'Liberation Sans',sans-serif;font-size:11.4px;color:#000;letter-spacing:-0.355px;left:-406.96px;width:1000px;text-align:right;">1.30</span>
<span class="t" style="top:607.40px;line-height:16px;font-family:'Liberation Sans',sans-serif;font-size:11.4px;color:#000;letter-spacing:0.380px;left:-296.22px;width:1000px;text-align:right;">gbpusd</span>
<span class="t" style="top:607.40px;line-height:16px;font-family:'Liberation Sans',sans-serif;font-size:11.4px;color:#000;letter-spacing:-0.330px;left:-186.93px;width:1000px;text-align:right;">1.36226</span>
<span class="t" style="top:607.40px;line-height:16px;font-family:'Liberation Sans',sans-serif;font-size:11.4px;color:#000;letter-spacing:-0.330px;left:-76.93px;width:1000px;text-align:right;">0.00000</span>
<span class="t" style="top:607.40px;line-height:16px;font-family:'Liberation Sans',sans-serif;font-size:11.4px;color:#000;letter-spacing:-0.330px;left:33.07px;width:1000px;text-align:right;">1.36246</span>
<span class="t" style="top:607.40px;line-height:16px;font-family:'Liberation Sans',sans-serif;font-size:11.4px;color:#000;letter-spacing:-0.277px;left:276.12px;width:1000px;text-align:right;">2021.10.05 11:35:52</span>
<span class="t" style="top:607.40px;line-height:16px;font-family:'Liberation Sans',sans-serif;font-size:11.4px;color:#000;letter-spacing:-0.330px;left:386.07px;width:1000px;text-align:right;">1.36246</span>
<span class="t" style="top:607.40px;line-height:16px;font-family:'Liberation Sans',sans-serif;font-size:11.4px;color:#000;letter-spacing:-0.355px;left:496.04px;width:1000px;text-align:right;">0.00</span>
<span class="t" style="top:607.40px;line-height:16px;font-family:'Liberation Sans',sans-serif;font-size:11.4px;color:#000;letter-spacing:-0.342px;left:617.06px;width:1000px;text-align:right;">26.00</span>
<span class="t" style="top:607.40px;line-height:16px;font-family:'Liberation Sans',sans-serif;font-size:11.4px;color:#000;letter-spacing:0.366px;left:952.77px;width:1000px;text-align:right;">Martingale Buy[tp]</span>
<div class="a" style="left:13px;top:626px;width:1944px;height:19px;background:#ececec"></div>
<div class="a" style="left:13px;top:645px;width:1944px;height:1px;background:#d2d2d2"></div>
<div class="a" style="left:154px;top:626px;width:1px;height:19px;background:#d8d8d8"></div>
<div class="a" style="left:397px;top:626px;width:1px;height:19px;background:#d8d8d8"></div>
<div class="a" style="left:507px;top:626px;width:1px;height:19px;background:#d8d8d8"></div>
<div class="a" style="left:595px;top:626px;width:1px;height:19px;background:#d8d8d8"></div>
<div class="a" style="left:705px;top:626px;width:1px;height:19px;background:#d8d8d8"></div>
<div class="a" style="left:815px;top:626px;width:1px;height:19px;background:#d8d8d8"></div>
<div class="a" style="left:925px;top:626px;width:1px;height:19px;background:#d8d8d8"></div>
<div class="a" style="left:1035px;top:626px;width:1px;height:19px;background:#d8d8d8"></div>
<div class="a" style="left:1278px;top:626px;width:1px;height:19px;background:#d8d8d8"></div>
<div class="a" style="left:1388px;top:626px;width:1px;height:19px;background:#d8d8d8"></div>
<div class="a" style="left:1498px;top:626px;width:1px;height:19px;background:#d8d8d8"></div>
<div class="a" style="left:1619px;top:626px;width:1px;height:19px;background:#d8d8d8"></div>
<div class="a" style="left:927px;top:627px;width:107px;height:18px;background:#60ee60"></div>
<svg class="a" style="left:15px;top:627px" width="16" height="16" viewBox="0 0 16 16"><path d="M1.5 1.5h7l3 3v9.5h-10z" fill="url(#gp)" stroke="#7c7c7c" stroke-width="1"/><path d="M8.5 1.5v3h3" fill="#f4f4f4" stroke="#7c7c7c"/><circle cx="11.5" cy="11.7" r="3.4" fill="url(#gb)" stroke="#0a60c0" stroke-width=".7"/></svg>
<span class="t" style="top:627.40px;line-height:16px;font-family:'Liberation Sans',sans-serif;font-size:11.4px;color:#000;letter-spacing:-0.358px;left:34.80px;">434847645</span>
<span class="t" style="top:627.40px;line-height:16px;font-family:'Liberation Sans',sans-serif;font-size:11.4px;color:#000;letter-spacing:-0.277px;left:-604.88px;width:1000px;text-align:right;">2021.10.05 11:22:06</span>
<span class="t" style="top:627.40px;line-height:16px;font-family:'Liberation Sans',sans-serif;font-size:11.4px;color:#000;letter-spacing:0.610px;left:-493.99px;width:1000px;text-align:right;">buy</span>
<span class="t" style="top:627.40px;line-height:16px;font-family:'Liberation Sans',sans-serif;font-size:11.4px;color:#000;letter-spacing:-0.355px;left:-406.96px;width:1000px;text-align:right;">1.69</span>
<span class="t" style="top:627.40px;line-height:16px;font-family:'Liberation Sans',sans-serif;font-size:11.4px;color:#000;letter-spacing:0.380px;left:-296.22px;width:1000px;text-align:right;">gbpusd</span>
<span class="t" style="top:627.40px;line-height:16px;font-family:'Liberation Sans',sans-serif;font-size:11.4px;color:#000;letter-spacing:-0.330px;left:-186.93px;width:1000px;text-align:right;">1.36175</span>
<span class="t" style="top:627.40px;line-height:16px;font-family:'Liberation Sans',sans-serif;font-size:11.4px;color:#000;letter-spacing:-0.330px;left:-76.93px;width:1000px;text-align:right;">0.00000</span>
<span class="t" style="top:627.40px;line-height:16px;font-family:'Liberation Sans',sans-serif;font-size:11.4px;color:#000;letter-spacing:-0.330px;left:33.07px;width:1000px;text-align:right;">1.36246</span>
<span class="t" style="top:627.40px;line-height:16px;font-family:'Liberation Sans',sans-serif;font-size:11.4px;color:#000;letter-spacing:-0.277px;left:276.12px;width:1000px;text-align:right;">2021.10.05 11:35:52</span>
<span class="t" style="top:627.40px;line-height:16px;font-family:'Liberation Sans',sans-serif;font-size:11.4px;color:#000;letter-spacing:-0.330px;left:386.07px;width:1000px;text-align:right;">1.36246</span>
<span class="t" style="top:627.40px;line-height:16px;font-family:'Liberation Sans',sans-serif;font-size:11.4px;color:#000;letter-spacing:-0.355px;left:496.04px;width:1000px;text-align:right;">0.00</span>
<span class="t" style="top:627.40px;line-height:16px;font-family:'Liberation Sans',sans-serif;font-size:11.4px;color:#000;letter-spacing:-0.327px;left:617.07px;width:1000px;text-align:right;">119.99</span>
<span class="t" style="top:627.40px;line-height:16px;font-family:'Liberation Sans',sans-serif;font-size:11.4px;color:#000;letter-spacing:0.366px;left:952.77px;width:1000px;text-align:right;">Martingale Buy[tp]</span>
<div class="a" style="left:13px;top:646px;width:1944px;height:19px;background:#c8c8c8"></div>
<svg class="a" style="left:18px;top:650px" width="12" height="12" viewBox="0 0 12 12"><circle cx="5.8" cy="5.6" r="3.2" fill="#d8d8d8" stroke="#8e8e8e" stroke-width="1.2"/></svg>
<span class="t" style="top:647.20px;line-height:16px;font-family:'Liberation Sans',sans-serif;font-size:11.4px;color:#000;font-weight:bold;letter-spacing:0.111px;left:34.40px;white-space:pre;">Gewinn/Verlust: 306.16  Kredit/Bonus: 0.00  Einzahlungen: 0.00  Auszahlungen: 0.00</span>
<span class="t" style="top:647.20px;line-height:16px;font-family:'Liberation Sans',sans-serif;font-size:11.4px;color:#000;font-weight:bold;letter-spacing:0.426px;left:616.83px;width:1000px;text-align:right;">306.16</span>
</div>
</body></html>
